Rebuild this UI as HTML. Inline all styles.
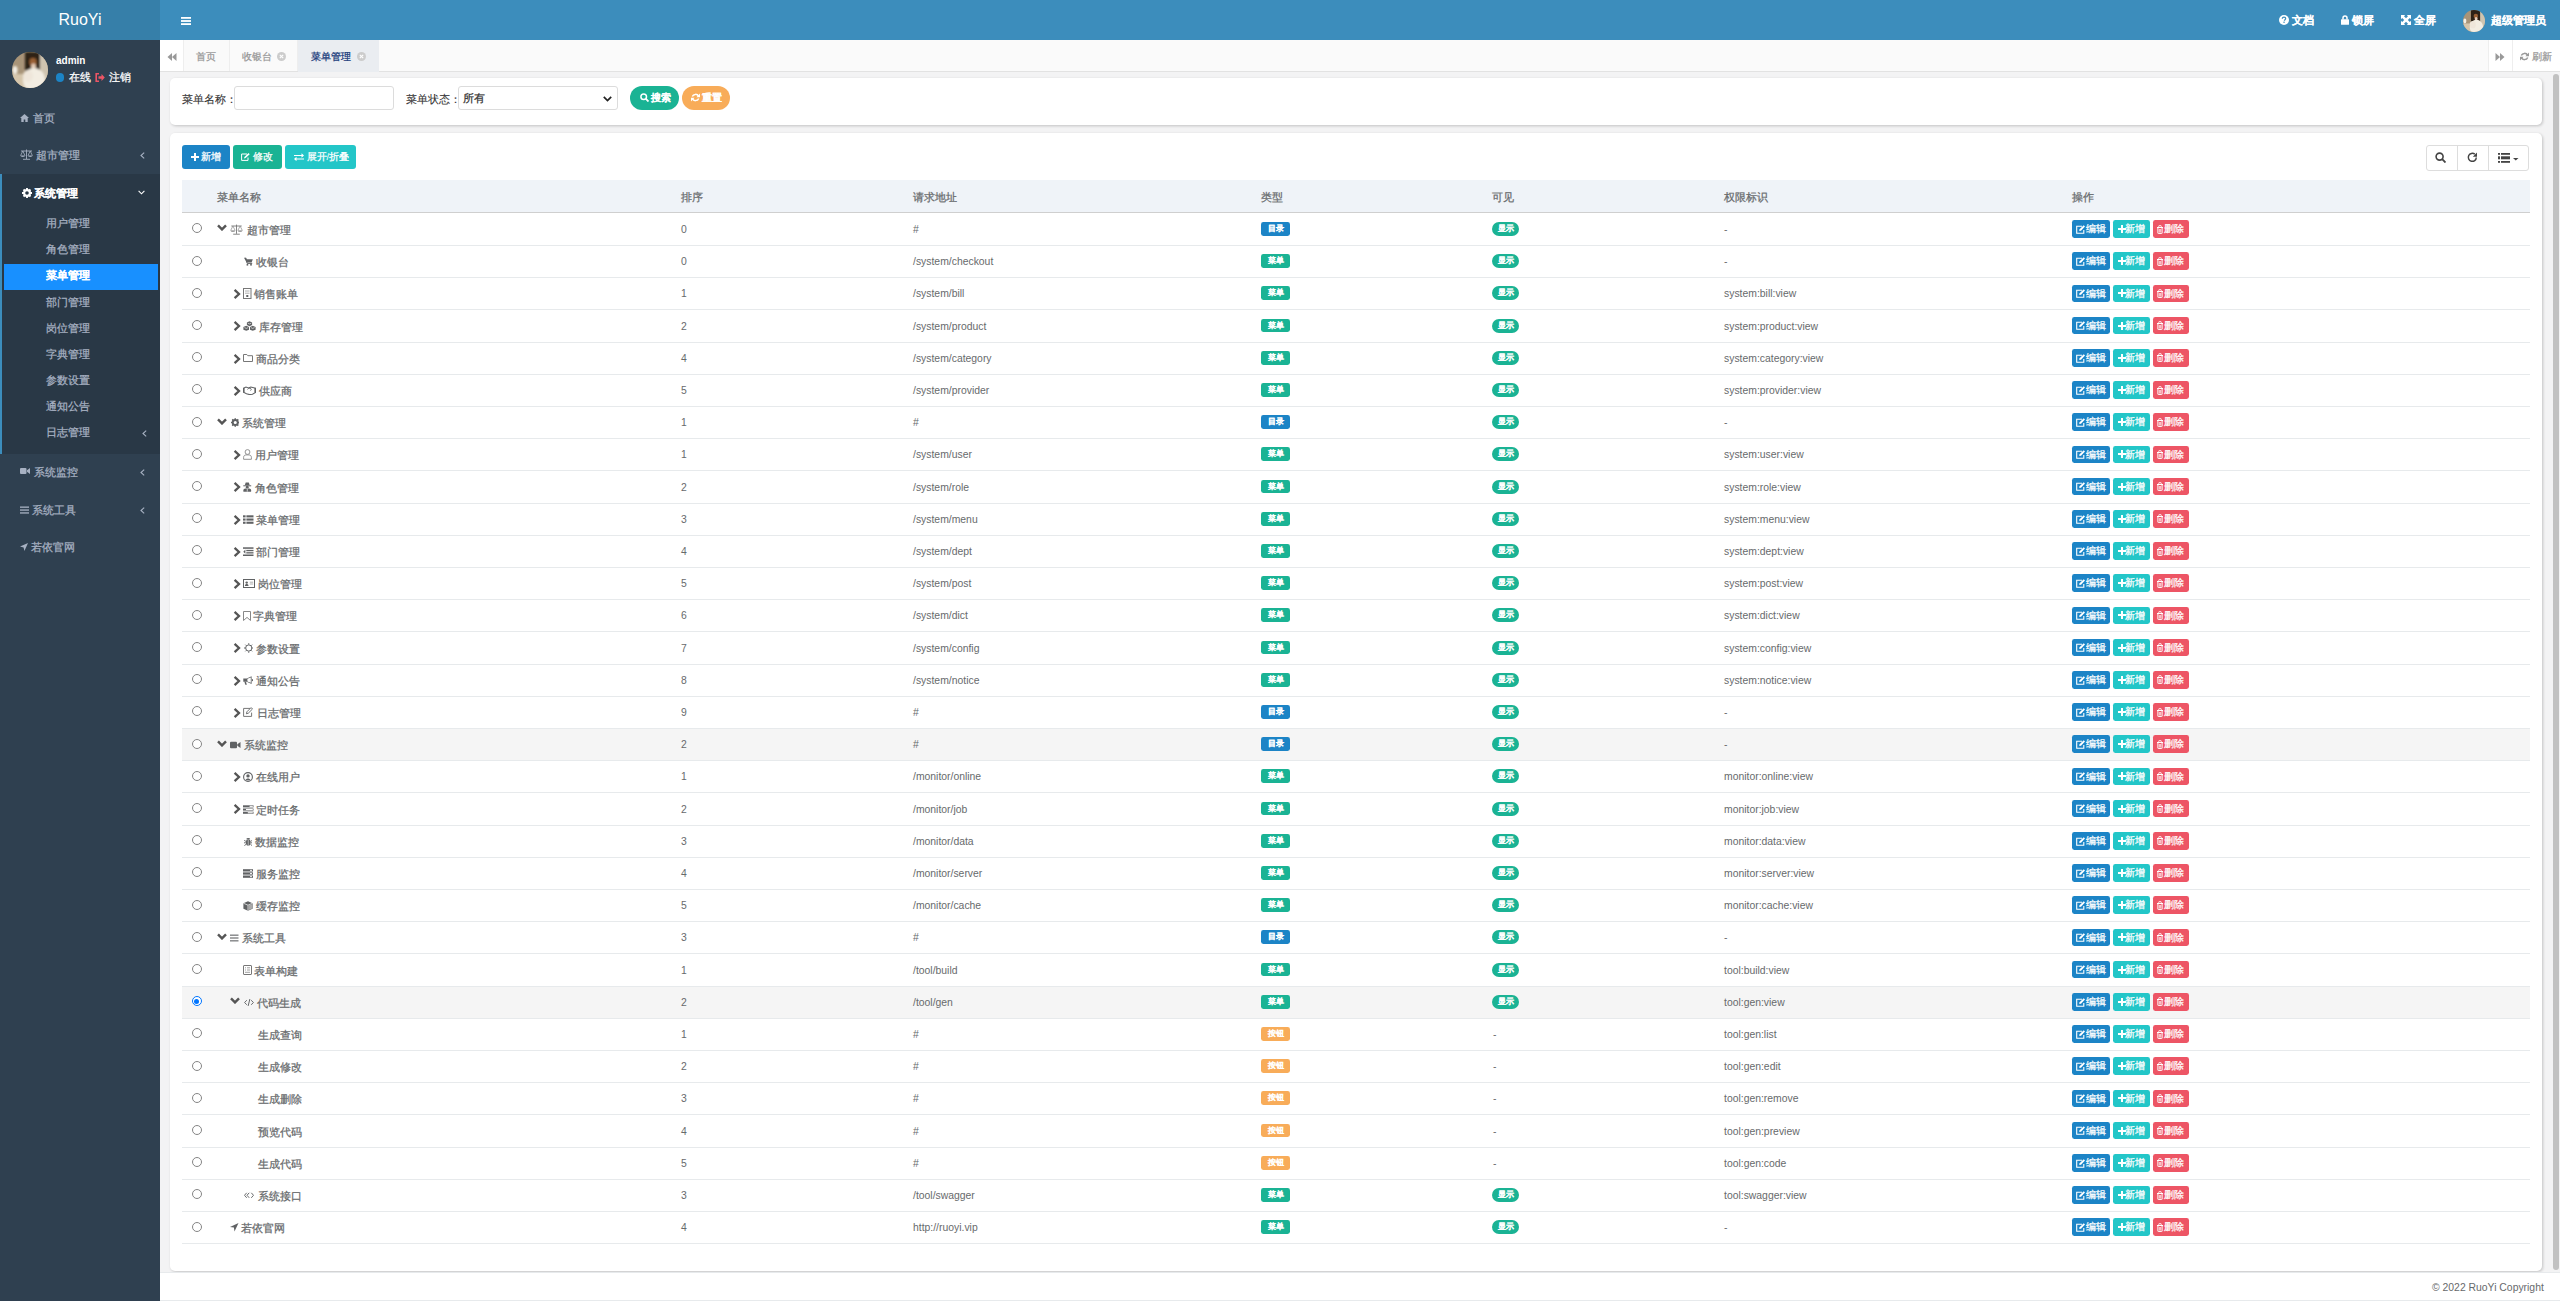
<!DOCTYPE html><html><head><meta charset="utf-8"><title>RuoYi</title><style>
*{box-sizing:border-box;margin:0;padding:0}
html,body{width:2560px;height:1301px;overflow:hidden}
body{font-family:"Liberation Sans",sans-serif;font-size:10.4px;color:#676a6c;background:#f3f3f4;position:relative}
.abs{position:absolute}
#side{position:absolute;left:0;top:0;width:160px;height:1301px;background:#2f4050}
#logo{position:absolute;left:0;top:0;width:160px;height:40px;background:#367fa9;color:#fff;font-size:16px;line-height:40px;text-align:center}
#hdr{position:absolute;left:160px;top:0;width:2400px;height:40px;background:#3c8dbc}
.menu{position:absolute;left:0;width:160px;color:#b8c7ce;font-size:10.4px;height:20px;line-height:20px;white-space:nowrap}
.menu .t{position:absolute}
.sub{position:absolute;left:45px;color:#b8c7ce;height:20px;line-height:20px}
#tabs{position:absolute;left:160px;top:40px;width:2400px;height:32px;background:#fafafa;border-bottom:1px solid #e2e2e2}
.tab{position:absolute;top:0;height:31px;line-height:31px;font-size:9.6px;color:#999;border-right:1px solid #eee;text-align:left}
.panel{position:absolute;left:170px;width:2372px;background:#fff;border-radius:5px;box-shadow:1px 1px 3px rgba(0,0,0,.2)}
.row{position:absolute;left:182px;width:2348px;height:32.2px;border-bottom:1px solid #e7eaec}
.cell{position:absolute;top:1px;line-height:30px;white-space:nowrap;font-size:10.4px;color:#676a6c}
.exp,.ico{position:absolute;line-height:0}
.radio{position:absolute;left:10px;top:9.6px;width:10px;height:10px;border:1px solid #858585;border-radius:50%;background:#fff}
.radio.sel{border:1.3px solid #0075ff;background:#fff}
.radio.sel::after{content:"";position:absolute;left:1.35px;top:1.35px;width:5px;height:5px;border-radius:50%;background:#0075ff}
.lblwrap{position:absolute;top:8.2px;line-height:0}
.lbl{display:inline-block;height:13.8px;line-height:13.8px;width:29px;text-align:center;font-size:7.8px;font-weight:bold;color:#fff;border-radius:2.4px}
.lp{background:#1c84c6}.ls{background:#1ab394}.lw{background:#f8ac59}
.badge{display:inline-block;height:14px;line-height:14px;width:27.4px;text-align:center;font-size:7.8px;font-weight:bold;color:#fff;border-radius:7px;background:#1ab394}
.ops{position:absolute;top:6.4px;height:18px;white-space:nowrap;line-height:0}
.bx{display:inline-block;position:relative;height:17.6px;line-height:17.6px;font-size:9.6px;color:#fff;border-radius:2.4px;margin-right:3.2px;vertical-align:top;text-align:left;white-space:nowrap}
.bp{background:#1c84c6;width:38px;padding-left:13.6px}.bi{background:#23c6c8;width:37px;padding-left:12.3px}.bd{background:#ed5565;width:35.7px;padding-left:10.2px}
.bx i{position:absolute;line-height:0}
.z{-webkit-text-stroke:0.25px currentColor;font-size:104%}
[style*="font-weight:bold"] .z,.lbl .z,.badge .z,.ns .z{-webkit-text-stroke:0.1px}

.avatar{position:absolute;border-radius:50%;overflow:hidden;background:
 radial-gradient(ellipse 30% 45% at 50% 72%, #f4efe4 0%, #ece3d2 60%, rgba(236,227,210,0) 100%),
 radial-gradient(ellipse 22% 20% at 48% 30%, #c9a07a 0%, #8a5a3a 60%, rgba(80,50,30,0) 100%),
 radial-gradient(circle at 15% 35%, #d8c7a8 0%, rgba(216,199,168,0) 25%),
 linear-gradient(180deg,#4a3a2c 0%, #6d5a45 40%, #bfae90 75%, #e4d8c2 100%)}
</style></head><body>
<div id="side"></div><div id="logo">RuoYi</div><div id="hdr"></div>
<div class="abs" style="left:11.8px;top:52.2px;width:36px;height:36px;line-height:0"><svg width="36" height="36" viewBox="0 0 36 36" style="display:block"><defs><clipPath id="aca"><circle cx="18" cy="18" r="18"/></clipPath><filter id="afa" x="-20%" y="-20%" width="140%" height="140%"><feGaussianBlur stdDeviation="1.3"/></filter></defs><g clip-path="url(#aca)"><rect width="36" height="36" fill="#a89478"/><g filter="url(#afa)"><rect x="24" y="0" width="14" height="36" fill="#cfc4b0"/><rect x="0" y="22" width="14" height="16" fill="#d6c6ac"/><rect x="13" y="0" width="15" height="20" fill="#2e2418"/><ellipse cx="3" cy="18" rx="2.5" ry="4" fill="#f4f0e6"/><ellipse cx="21" cy="10" rx="3.6" ry="4" fill="#9a6035"/><ellipse cx="21.5" cy="14.5" rx="2.4" ry="3" fill="#e6cdb8"/><ellipse cx="22" cy="28" rx="11" ry="12" fill="#f3ede2"/><ellipse cx="16" cy="24" rx="5" ry="6" fill="#efe6da"/></g></g></svg></div>
<span class="abs" style="left:56px;top:54px;line-height:14px;font-size:10px;font-weight:bold;color:#fff">admin</span>
<span class="abs" style="left:55.5px;top:73.2px;width:8.8px;height:8.8px;border-radius:50%;background:#1c84c6"></span>
<span class="abs" style="left:69px;top:70px;line-height:15px;font-size:10.4px;color:#fff"><span class="z">在线</span></span>
<span class="abs" style="left:95px;top:73px;line-height:0"><svg width="10" height="9" viewBox="0 0 10 9" style="display:inline-block;vertical-align:middle;"><path d="M4 0.8H1.2v7.4H4" fill="none" stroke="#ed5565" stroke-width="1.6"/><path d="M3.5 3.2h3V1l3.3 3.5L6.5 8V5.8h-3z" fill="#ed5565"/></svg></span>
<span class="abs" style="left:108.8px;top:70px;line-height:15px;font-size:10.4px;color:#fff"><span class="z">注销</span></span>
<span class="abs" style="left:20px;top:113.5px;line-height:0"><svg width="9" height="8" viewBox="0 0 9 8" style="display:inline-block;vertical-align:middle;"><path d="M4.5 0L0 4h1.3v4h2.4V5.5h1.6V8h2.4V4H9z" fill="#a7b1c2"/></svg></span>
<span class="abs sb" style="left:32.6px;top:109.5px;line-height:16px;font-size:10.4px;color:#a7b1c2;white-space:nowrap"><span class="z">首页</span></span>
<span class="abs" style="left:19.7px;top:149px;line-height:0"><svg width="13" height="11" viewBox="0 0 13 11" style="display:inline-block;vertical-align:middle;"><path d="M6.5 0.5v9.5M3 10.3h7M1 2h11" fill="none" stroke="#a7b1c2" stroke-width="0.9"/><path d="M2.8 2L0.6 6.6M2.8 2l2.2 4.6M10.2 2L8 6.6M10.2 2l2.2 4.6" fill="none" stroke="#a7b1c2" stroke-width="0.8"/><path d="M0.4 6.6h4.8a2.4 1.4 0 0 1-4.8 0zM7.8 6.6h4.8a2.4 1.4 0 0 1-4.8 0z" fill="#a7b1c2"/></svg></span>
<span class="abs sb" style="left:36.3px;top:146.5px;line-height:16px;font-size:10.4px;color:#a7b1c2;white-space:nowrap"><span class="z">超市管理</span></span>
<span class="abs" style="left:140px;top:152.0px;line-height:0"><svg width="5" height="7" viewBox="0 0 5 7" style="display:inline-block;vertical-align:middle;"><path d="M4.2 0.6L1 3.5l3.2 2.9" fill="none" stroke="#a7b1c2" stroke-width="1.1"/></svg></span>
<div class="abs" style="left:0;top:174px;width:160px;height:280px;background:#293846"></div>
<div class="abs" style="left:0;top:174px;width:2.2px;height:280px;background:#3c8dbc"></div>
<span class="abs" style="left:21.5px;top:187.8px;line-height:0"><svg width="10" height="10" viewBox="0 0 10 10" style="display:inline-block;vertical-align:middle;"><circle cx="5" cy="5" r="2.9" fill="none" stroke="#fff" stroke-width="2.2"/><path d="M5 0v2.2M5 7.8V10M0 5h2.2M7.8 5H10M1.5 1.5l1.5 1.5M7 7l1.5 1.5M1.5 8.5L3 7M7 3l1.5-1.5" stroke="#fff" stroke-width="1.9"/></svg></span>
<span class="abs sb" style="left:33.8px;top:184.5px;line-height:16px;font-size:10.4px;color:#fff;font-weight:bold;white-space:nowrap"><span class="z">系统管理</span></span>
<span class="abs" style="left:137.8px;top:189.5px;line-height:0"><svg width="7" height="5" viewBox="0 0 7 5" style="display:inline-block;vertical-align:middle;"><path d="M0.6 0.8L3.5 3.8l2.9-3" fill="none" stroke="#fff" stroke-width="1.1"/></svg></span>
<div class="abs" style="left:4px;top:263.7px;width:154px;height:26.1px;background:#1890ff"></div>
<span class="abs sb" style="left:45.5px;top:215px;line-height:16px;font-size:10.4px;color:#a7b1c2;white-space:nowrap"><span class="z">用户管理</span></span>
<span class="abs sb" style="left:45.5px;top:241px;line-height:16px;font-size:10.4px;color:#a7b1c2;white-space:nowrap"><span class="z">角色管理</span></span>
<span class="abs sb" style="left:45.5px;top:267.4px;line-height:16px;font-size:10.4px;color:#fff;font-weight:bold;white-space:nowrap"><span class="z">菜单管理</span></span>
<span class="abs sb" style="left:45.5px;top:293.5px;line-height:16px;font-size:10.4px;color:#a7b1c2;white-space:nowrap"><span class="z">部门管理</span></span>
<span class="abs sb" style="left:45.5px;top:319.5px;line-height:16px;font-size:10.4px;color:#a7b1c2;white-space:nowrap"><span class="z">岗位管理</span></span>
<span class="abs sb" style="left:45.5px;top:345.8px;line-height:16px;font-size:10.4px;color:#a7b1c2;white-space:nowrap"><span class="z">字典管理</span></span>
<span class="abs sb" style="left:45.5px;top:372px;line-height:16px;font-size:10.4px;color:#a7b1c2;white-space:nowrap"><span class="z">参数设置</span></span>
<span class="abs sb" style="left:45.5px;top:398px;line-height:16px;font-size:10.4px;color:#a7b1c2;white-space:nowrap"><span class="z">通知公告</span></span>
<span class="abs sb" style="left:45.5px;top:424px;line-height:16px;font-size:10.4px;color:#a7b1c2;white-space:nowrap"><span class="z">日志管理</span></span>
<span class="abs" style="left:142px;top:429.5px;line-height:0"><svg width="5" height="7" viewBox="0 0 5 7" style="display:inline-block;vertical-align:middle;"><path d="M4.2 0.6L1 3.5l3.2 2.9" fill="none" stroke="#a7b1c2" stroke-width="1.1"/></svg></span>
<span class="abs" style="left:20px;top:467.2px;line-height:0"><svg width="10" height="8" viewBox="0 0 10 8" style="display:inline-block;vertical-align:middle;"><rect x="0" y="1" width="6.5" height="6" rx="1" fill="#a7b1c2"/><path d="M7 3.2L10 1v6L7 4.8z" fill="#a7b1c2"/></svg></span>
<span class="abs sb" style="left:33.5px;top:463.7px;line-height:16px;font-size:10.4px;color:#a7b1c2;white-space:nowrap"><span class="z">系统监控</span></span>
<span class="abs" style="left:140px;top:469.0px;line-height:0"><svg width="5" height="7" viewBox="0 0 5 7" style="display:inline-block;vertical-align:middle;"><path d="M4.2 0.6L1 3.5l3.2 2.9" fill="none" stroke="#a7b1c2" stroke-width="1.1"/></svg></span>
<span class="abs" style="left:20px;top:505.5px;line-height:0"><svg width="9" height="8" viewBox="0 0 9 8" style="display:inline-block;vertical-align:middle;"><rect x="0" y="0.5" width="9" height="1.3" fill="#a7b1c2"/><rect x="0" y="3.4" width="9" height="1.3" fill="#a7b1c2"/><rect x="0" y="6.3" width="9" height="1.3" fill="#a7b1c2"/></svg></span>
<span class="abs sb" style="left:32px;top:501.8px;line-height:16px;font-size:10.4px;color:#a7b1c2;white-space:nowrap"><span class="z">系统工具</span></span>
<span class="abs" style="left:140px;top:507.0px;line-height:0"><svg width="5" height="7" viewBox="0 0 5 7" style="display:inline-block;vertical-align:middle;"><path d="M4.2 0.6L1 3.5l3.2 2.9" fill="none" stroke="#a7b1c2" stroke-width="1.1"/></svg></span>
<span class="abs" style="left:20px;top:542.5px;line-height:0"><svg width="8" height="8" viewBox="0 0 8 8" style="display:inline-block;vertical-align:middle;"><path d="M8 0L0 3.6l3.6 0.8L4.4 8z" fill="#a7b1c2"/></svg></span>
<span class="abs sb" style="left:31px;top:538.8px;line-height:16px;font-size:10.4px;color:#a7b1c2;white-space:nowrap"><span class="z">若依官网</span></span>
<span class="abs" style="left:181px;top:16.9px;line-height:0"><svg width="10" height="8" viewBox="0 0 10 8" style="display:inline-block;vertical-align:middle;"><rect x="0" y="0" width="10" height="1.8" fill="#fff"/><rect x="0" y="3.1" width="10" height="1.8" fill="#fff"/><rect x="0" y="6.2" width="10" height="1.8" fill="#fff"/></svg></span>
<span class="abs" style="left:2279px;top:14.9px;line-height:0"><svg width="10" height="10" viewBox="0 0 10 10" style="display:inline-block;vertical-align:middle;"><circle cx="5" cy="5" r="5" fill="#fff"/><path d="M3.3 3.7c0-1 0.8-1.6 1.7-1.6 1 0 1.7 0.6 1.7 1.5 0 1.1-1.3 1.2-1.3 2.1" fill="none" stroke="#3c8dbc" stroke-width="1.2"/><rect x="4.4" y="6.6" width="1.3" height="1.3" fill="#3c8dbc"/></svg></span>
<span class="abs" style="left:2292.2px;top:12.3px;line-height:16px;font-size:10.8px;font-weight:bold;color:#fff;white-space:nowrap"><span class="z">文档</span></span>
<span class="abs" style="left:2341px;top:15px;line-height:0"><svg width="8" height="10" viewBox="0 0 8 10" style="display:inline-block;vertical-align:middle;"><path d="M2 4.5V3a2 2 0 0 1 4 0v1.5" fill="none" stroke="#fff" stroke-width="1.5"/><rect x="0" y="4.3" width="8" height="5.5" rx="0.6" fill="#fff"/></svg></span>
<span class="abs" style="left:2352px;top:12.3px;line-height:16px;font-size:10.8px;font-weight:bold;color:#fff;white-space:nowrap"><span class="z">锁屏</span></span>
<span class="abs" style="left:2400.8px;top:15px;line-height:0"><svg width="10" height="10" viewBox="0 0 10 10" style="display:inline-block;vertical-align:middle;"><path d="M0 0h4.2L3 1.2l2 2 2-2L5.8 0H10v4.2L8.8 3l-2 2 2 2L10 5.8V10H5.8L7 8.8l-2-2-2 2L4.2 10H0V5.8L1.2 7l2-2-2-2L0 4.2z" fill="#fff"/></svg></span>
<span class="abs" style="left:2413.8px;top:12.3px;line-height:16px;font-size:10.8px;font-weight:bold;color:#fff;white-space:nowrap"><span class="z">全屏</span></span>
<div class="abs" style="left:2463px;top:9.6px;width:22px;height:22px;line-height:0"><svg width="22" height="22" viewBox="0 0 36 36" style="display:block"><defs><clipPath id="acb"><circle cx="18" cy="18" r="18"/></clipPath><filter id="afb" x="-20%" y="-20%" width="140%" height="140%"><feGaussianBlur stdDeviation="1.3"/></filter></defs><g clip-path="url(#acb)"><rect width="36" height="36" fill="#a89478"/><g filter="url(#afb)"><rect x="24" y="0" width="14" height="36" fill="#cfc4b0"/><rect x="0" y="22" width="14" height="16" fill="#d6c6ac"/><rect x="13" y="0" width="15" height="20" fill="#2e2418"/><ellipse cx="3" cy="18" rx="2.5" ry="4" fill="#f4f0e6"/><ellipse cx="21" cy="10" rx="3.6" ry="4" fill="#9a6035"/><ellipse cx="21.5" cy="14.5" rx="2.4" ry="3" fill="#e6cdb8"/><ellipse cx="22" cy="28" rx="11" ry="12" fill="#f3ede2"/><ellipse cx="16" cy="24" rx="5" ry="6" fill="#efe6da"/></g></g></svg></div>
<span class="abs" style="left:2491px;top:12.3px;line-height:16px;font-size:10.8px;font-weight:bold;color:#fff;white-space:nowrap"><span class="z">超级管理员</span></span>
<div id="tabs"></div>
<div class="abs" style="left:160px;top:40px;width:23.5px;height:31px;background:#fff;border-right:1px solid #eee"></div>
<span class="abs" style="left:167.3px;top:53.4px;line-height:0"><svg width="10" height="8" viewBox="0 0 10 8" style="display:inline-block;vertical-align:middle;"><path d="M5 0v8L0.5 4zM9.5 0v8L5 4z" fill="#999"/></svg></span>
<div class="abs" style="left:183.5px;top:40px;width:46px;height:31px;border-right:1px solid #eee"></div>
<span class="abs" style="left:196.4px;top:48.5px;line-height:16px;font-size:9.8px;color:#999"><span class="z">首页</span></span>
<div class="abs" style="left:229.5px;top:40px;width:68.5px;height:31px;border-right:1px solid #eee"></div>
<span class="abs" style="left:241.8px;top:48.5px;line-height:16px;font-size:9.8px;color:#999"><span class="z">收银台</span></span>
<span class="abs" style="left:277px;top:52.3px;line-height:0"><svg width="9" height="9" viewBox="0 0 9 9" style="display:inline-block;vertical-align:middle;"><circle cx="4.5" cy="4.5" r="4.5" fill="#ccc"/><path d="M2.8 2.8l3.4 3.4M6.2 2.8L2.8 6.2" stroke="#fff" stroke-width="1.1"/></svg></span>
<div class="abs" style="left:298.3px;top:40px;width:80.7px;height:32px;background:#eaedf1"></div>
<span class="abs" style="left:311.2px;top:48.5px;line-height:16px;font-size:9.8px;color:#17397a"><span class="z">菜单管理</span></span>
<span class="abs" style="left:357px;top:52.3px;line-height:0"><svg width="9" height="9" viewBox="0 0 9 9" style="display:inline-block;vertical-align:middle;"><circle cx="4.5" cy="4.5" r="4.5" fill="#ccc"/><path d="M2.8 2.8l3.4 3.4M6.2 2.8L2.8 6.2" stroke="#fff" stroke-width="1.1"/></svg></span>
<div class="abs" style="left:2488.3px;top:40px;width:72px;height:31px;background:#fff;border-left:1px solid #eee"></div>
<div class="abs" style="left:2512px;top:40px;width:1px;height:31px;background:#eee"></div>
<span class="abs" style="left:2495.4px;top:53.4px;line-height:0"><svg width="10" height="8" viewBox="0 0 10 8" style="display:inline-block;vertical-align:middle;"><path d="M0.5 0v8L5 4zM5 0v8L9.5 4z" fill="#999"/></svg></span>
<span class="abs" style="left:2520px;top:52px;line-height:0"><svg width="9" height="9" viewBox="0 0 9 9" style="display:inline-block;vertical-align:middle;"><path d="M7.6 3.4A3.4 3.4 0 0 0 1.3 3.6M1.4 5.6A3.4 3.4 0 0 0 7.7 5.4" fill="none" stroke="#999" stroke-width="1.5"/><path d="M9 0.6v3.6H5.4zM0 8.4V4.8h3.6z" fill="#999"/></svg></span>
<span class="abs" style="left:2532px;top:48.5px;line-height:16px;font-size:9.8px;color:#999"><span class="z">刷新</span></span>
<div class="panel" style="top:78px;height:47px"></div>
<div class="panel" style="top:133px;height:1138px"></div>
<span class="abs ns" style="left:182.3px;top:91px;line-height:16px;font-size:10.4px;color:#333"><span class="z">菜单名称：</span></span>
<div class="abs" style="left:234.3px;top:86.2px;width:159.8px;height:23.6px;border:1px solid #dcdcdc;border-radius:3px;background:#fff"></div>
<span class="abs ns" style="left:406.4px;top:91px;line-height:16px;font-size:10.4px;color:#333"><span class="z">菜单状态：</span></span>
<div class="abs" style="left:458.4px;top:86.2px;width:159.4px;height:23.6px;border:1px solid #dcdcdc;border-radius:3px;background:#fff"></div>
<span class="abs" style="left:463px;top:90px;line-height:16px;font-size:10.4px;color:#333"><span class="z">所有</span></span>
<span class="abs" style="left:602.5px;top:95.5px;line-height:0"><svg width="9" height="6" viewBox="0 0 9 6" style="display:inline-block;vertical-align:middle;"><path d="M0.8 0.8L4.5 4.5 8.2 0.8" fill="none" stroke="#222" stroke-width="1.7"/></svg></span>
<div class="abs" style="left:630px;top:86px;width:48.8px;height:23.8px;border-radius:12px;background:#1ab394"></div>
<span class="abs" style="left:639.5px;top:93px;line-height:0"><svg width="9" height="9" viewBox="0 0 9 9" style="display:inline-block;vertical-align:middle;"><circle cx="3.7" cy="3.7" r="2.8" fill="none" stroke="#fff" stroke-width="1.5"/><path d="M5.7 5.7L8.5 8.5" stroke="#fff" stroke-width="1.8"/></svg></span>
<span class="abs" style="left:651px;top:90px;line-height:16px;font-size:9.6px;color:#fff;font-weight:bold"><span class="z">搜索</span></span>
<div class="abs" style="left:682px;top:86px;width:48px;height:23.8px;border-radius:12px;background:#f8ac59"></div>
<span class="abs" style="left:690.5px;top:93px;line-height:0"><svg width="9" height="9" viewBox="0 0 9 9" style="display:inline-block;vertical-align:middle;"><path d="M7.6 3.4A3.4 3.4 0 0 0 1.3 3.6M1.4 5.6A3.4 3.4 0 0 0 7.7 5.4" fill="none" stroke="#fff" stroke-width="1.5"/><path d="M9 0.6v3.6H5.4zM0 8.4V4.8h3.6z" fill="#fff"/></svg></span>
<span class="abs" style="left:702px;top:90px;line-height:16px;font-size:9.6px;color:#fff;font-weight:bold"><span class="z">重置</span></span>
<div class="abs" style="left:182.1px;top:145.2px;width:47.7px;height:23.5px;border-radius:3px;background:#1c84c6"></div><span class="abs" style="left:190.6px;top:152.5px;line-height:0"><svg width="8" height="8" viewBox="0 0 8 8" style="display:inline-block;vertical-align:middle;"><path d="M3 0h2v3h3v2H5v3H3V5H0V3h3z" fill="#fff"/></svg></span><span class="abs" style="left:201px;top:149px;line-height:16px;font-size:9.6px;color:#fff;white-space:nowrap"><span class="z">新增</span></span>
<div class="abs" style="left:233.1px;top:145.2px;width:48.6px;height:23.5px;border-radius:3px;background:#1ab394"></div><span class="abs" style="left:241.1px;top:152.5px;line-height:0"><svg width="9" height="8" viewBox="0 0 9 8" style="display:inline-block;vertical-align:middle;"><path d="M6 1H0.6v6.4H7V4.5" fill="none" stroke="#fff" stroke-width="1"/><path d="M3 5.5l0.4-1.6L7.5 0l1.2 1.2L4.6 5.1z" fill="#fff"/></svg></span><span class="abs" style="left:253px;top:149px;line-height:16px;font-size:9.6px;color:#fff;white-space:nowrap"><span class="z">修改</span></span>
<div class="abs" style="left:285.1px;top:145.2px;width:70.9px;height:23.5px;border-radius:3px;background:#23c6c8"></div><span class="abs" style="left:293.6px;top:152.5px;line-height:0"><svg width="10" height="8" viewBox="0 0 10 8" style="display:inline-block;vertical-align:middle;"><path d="M0 2h7.5V0.3L10 2.5 7.5 4.7V3H0zM10 5.5H2.5V3.8L0 6l2.5 2.2V6.5H10z" fill="#fff"/></svg></span><span class="abs" style="left:306.5px;top:149px;line-height:16px;font-size:9.6px;color:#fff;white-space:nowrap"><span class="z">展开</span>/<span class="z">折叠</span></span>
<div class="abs" style="left:2425.6px;top:145.2px;width:103.8px;height:26.3px;border:1px solid #ddd;border-radius:3px;background:#fff"></div>
<div class="abs" style="left:2456.5px;top:145.2px;width:1px;height:26.3px;background:#ddd"></div>
<div class="abs" style="left:2488.3px;top:145.2px;width:1px;height:26.3px;background:#ddd"></div>
<span class="abs" style="left:2435px;top:152px;line-height:0"><svg width="11" height="11" viewBox="0 0 11 11" style="display:inline-block;vertical-align:middle;"><circle cx="4.6" cy="4.6" r="3.5" fill="none" stroke="#444" stroke-width="1.6"/><path d="M7.2 7.2L10.5 10.5" stroke="#444" stroke-width="1.8"/></svg></span>
<span class="abs" style="left:2467px;top:152px;line-height:0"><svg width="11" height="11" viewBox="0 0 11 11" style="display:inline-block;vertical-align:middle;"><path d="M9.3 5.5A4 4 0 1 1 7.8 2.2" fill="none" stroke="#444" stroke-width="1.5"/><path d="M10 0.5v4.2H5.8z" fill="#444"/></svg></span>
<span class="abs" style="left:2498px;top:153px;line-height:0"><svg width="21" height="10" viewBox="0 0 21 10" style="display:inline-block;vertical-align:middle;"><rect x="0" y="0" width="2" height="1.8" fill="#444"/><rect x="3" y="0" width="9" height="1.8" fill="#444"/><rect x="0" y="3.3" width="2" height="3" fill="#444"/><rect x="3" y="3.3" width="9" height="3" fill="#444"/><rect x="0" y="8" width="2" height="1.8" fill="#444"/><rect x="3" y="8" width="9" height="1.8" fill="#444"/><path d="M15 5h5.5L17.75 7.6z" fill="#444"/></svg></span>
<div class="abs" style="left:182px;top:180px;width:2348px;height:33px;background:#eff3f8;border-bottom:1.3px solid #cfcfcf"></div>
<span class="abs" style="left:217px;top:189px;line-height:16px;color:#676a6c"><span class="z">菜单名称</span></span>
<span class="abs" style="left:681px;top:189px;line-height:16px;color:#676a6c"><span class="z">排序</span></span>
<span class="abs" style="left:913px;top:189px;line-height:16px;color:#676a6c"><span class="z">请求地址</span></span>
<span class="abs" style="left:1261px;top:189px;line-height:16px;color:#676a6c"><span class="z">类型</span></span>
<span class="abs" style="left:1492px;top:189px;line-height:16px;color:#676a6c"><span class="z">可见</span></span>
<span class="abs" style="left:1724px;top:189px;line-height:16px;color:#676a6c"><span class="z">权限标识</span></span>
<span class="abs" style="left:2072px;top:189px;line-height:16px;color:#676a6c"><span class="z">操作</span></span>
<div class="row" style="top:213.90px;"><span class="radio"></span><span class="exp" style="left:35.0px;top:10.50px"><svg width="10" height="7" viewBox="0 0 10 7" style="display:inline-block;vertical-align:middle;"><path d="M1 1.3 L5 5.4 L9 1.3" fill="none" stroke="#555" stroke-width="2.4"/></svg></span><span class="ico" style="left:48.0px;top:10.00px"><svg width="13" height="11" viewBox="0 0 13 11" style="display:inline-block;vertical-align:middle;"><path d="M6.5 0.6v9.2M3.2 10.2h6.6M1.3 2h10.4" fill="none" stroke="#777" stroke-width="0.9"/><path d="M2.9 2L0.7 6.4M2.9 2l2.2 4.4M10.1 2L7.9 6.4M10.1 2l2.2 4.4" fill="none" stroke="#888" stroke-width="0.7"/><path d="M0.5 6.4h4.8a2.4 1.3 0 0 1-4.8 0zM7.7 6.4h4.8a2.4 1.3 0 0 1-4.8 0z" fill="#777"/></svg></span><span class="cell" style="left:64.5px"><span class="z">超市管理</span></span><span class="cell" style="left:499px">0</span><span class="cell" style="left:731px">#</span><span class="lblwrap" style="left:1079px"><span class="lbl lp"><span class="z">目录</span></span></span><span class="lblwrap" style="left:1310px"><span class="badge"><span class="z">显示</span></span></span><span class="cell" style="left:1542px">-</span><span class="ops" style="left:1890px"><span class="bx bp"><i style="left:4.3px;top:4.6px"><svg width="9" height="9" viewBox="0 0 9 9" style="display:inline-block;vertical-align:middle;"><path d="M6 1.2H0.7v7.1h7.1V5" fill="none" stroke="#fff" stroke-width="1.1"/><path d="M3.2 6.1l0.4-1.8L7.7 0.2l1.3 1.3L5 5.7z" fill="#fff"/></svg></i><span class="z">编辑</span></span><span class="bx bi"><i style="left:5px;top:4.8px"><svg width="8" height="8" viewBox="0 0 8 8" style="display:inline-block;vertical-align:middle;"><path d="M3 0h2v3h3v2H5v3H3V5H0V3h3z" fill="#fff"/></svg></i><span class="z">新增</span></span><span class="bx bd"><i style="left:3.8px;top:4.4px"><svg width="6" height="9" viewBox="0 0 6 9" style="display:inline-block;vertical-align:middle;"><path d="M1.8 2V1.2a0.8 0.8 0 0 1 0.8-0.8h0.8a0.8 0.8 0 0 1 0.8 0.8V2" fill="none" stroke="#fff" stroke-width="0.9"/><rect x="0" y="2" width="6" height="1" fill="#fff"/><path d="M0.9 3v5.1a0.5 0.5 0 0 0 0.5 0.5h3.2a0.5 0.5 0 0 0 0.5-0.5V3" fill="none" stroke="#fff" stroke-width="1"/><path d="M2.4 4v3.6M3.6 4v3.6" stroke="#fff" stroke-width="0.7"/></svg></i><span class="z">删除</span></span></span></div>
<div class="row" style="top:246.10px;"><span class="radio"></span><span class="ico" style="left:61.5px;top:11.00px"><svg width="9" height="9" viewBox="0 0 9 9" style="display:inline-block;vertical-align:middle;"><path d="M0 0.8h1.8l0.6 1.4h6.4L7.6 5.6H2.6z" fill="#606264"/><path d="M1.8 0.8l1.4 5.6h5" fill="none" stroke="#606264" stroke-width="1"/><rect x="2.6" y="7" width="1.6" height="1.6" fill="#606264"/><rect x="6.2" y="7" width="1.6" height="1.6" fill="#606264"/></svg></span><span class="cell" style="left:73.5px"><span class="z">收银台</span></span><span class="cell" style="left:499px">0</span><span class="cell" style="left:731px">/system/checkout</span><span class="lblwrap" style="left:1079px"><span class="lbl ls"><span class="z">菜单</span></span></span><span class="lblwrap" style="left:1310px"><span class="badge"><span class="z">显示</span></span></span><span class="cell" style="left:1542px">-</span><span class="ops" style="left:1890px"><span class="bx bp"><i style="left:4.3px;top:4.6px"><svg width="9" height="9" viewBox="0 0 9 9" style="display:inline-block;vertical-align:middle;"><path d="M6 1.2H0.7v7.1h7.1V5" fill="none" stroke="#fff" stroke-width="1.1"/><path d="M3.2 6.1l0.4-1.8L7.7 0.2l1.3 1.3L5 5.7z" fill="#fff"/></svg></i><span class="z">编辑</span></span><span class="bx bi"><i style="left:5px;top:4.8px"><svg width="8" height="8" viewBox="0 0 8 8" style="display:inline-block;vertical-align:middle;"><path d="M3 0h2v3h3v2H5v3H3V5H0V3h3z" fill="#fff"/></svg></i><span class="z">新增</span></span><span class="bx bd"><i style="left:3.8px;top:4.4px"><svg width="6" height="9" viewBox="0 0 6 9" style="display:inline-block;vertical-align:middle;"><path d="M1.8 2V1.2a0.8 0.8 0 0 1 0.8-0.8h0.8a0.8 0.8 0 0 1 0.8 0.8V2" fill="none" stroke="#fff" stroke-width="0.9"/><rect x="0" y="2" width="6" height="1" fill="#fff"/><path d="M0.9 3v5.1a0.5 0.5 0 0 0 0.5 0.5h3.2a0.5 0.5 0 0 0 0.5-0.5V3" fill="none" stroke="#fff" stroke-width="1"/><path d="M2.4 4v3.6M3.6 4v3.6" stroke="#fff" stroke-width="0.7"/></svg></i><span class="z">删除</span></span></span></div>
<div class="row" style="top:278.30px;"><span class="radio"></span><span class="exp" style="left:50.5px;top:10.90px"><svg width="8" height="10" viewBox="0 0 8 10" style="display:inline-block;vertical-align:middle;"><path d="M1.6 0.9 L6 5 L1.6 9.1" fill="none" stroke="#555" stroke-width="2.3"/></svg></span><span class="ico" style="left:61.2px;top:10.00px"><svg width="8.5" height="11" viewBox="0 0 8.5 11" style="display:inline-block;vertical-align:middle;"><rect x="0.5" y="0.5" width="7.5" height="10" fill="none" stroke="#777" stroke-width="1"/><path d="M2 3h4.5M2 5.2h4.5" stroke="#999" stroke-width="0.8"/><rect x="3.3" y="7" width="2" height="2" fill="#606264"/></svg></span><span class="cell" style="left:71.8px"><span class="z">销售账单</span></span><span class="cell" style="left:499px">1</span><span class="cell" style="left:731px">/system/bill</span><span class="lblwrap" style="left:1079px"><span class="lbl ls"><span class="z">菜单</span></span></span><span class="lblwrap" style="left:1310px"><span class="badge"><span class="z">显示</span></span></span><span class="cell" style="left:1542px">system:bill:view</span><span class="ops" style="left:1890px"><span class="bx bp"><i style="left:4.3px;top:4.6px"><svg width="9" height="9" viewBox="0 0 9 9" style="display:inline-block;vertical-align:middle;"><path d="M6 1.2H0.7v7.1h7.1V5" fill="none" stroke="#fff" stroke-width="1.1"/><path d="M3.2 6.1l0.4-1.8L7.7 0.2l1.3 1.3L5 5.7z" fill="#fff"/></svg></i><span class="z">编辑</span></span><span class="bx bi"><i style="left:5px;top:4.8px"><svg width="8" height="8" viewBox="0 0 8 8" style="display:inline-block;vertical-align:middle;"><path d="M3 0h2v3h3v2H5v3H3V5H0V3h3z" fill="#fff"/></svg></i><span class="z">新增</span></span><span class="bx bd"><i style="left:3.8px;top:4.4px"><svg width="6" height="9" viewBox="0 0 6 9" style="display:inline-block;vertical-align:middle;"><path d="M1.8 2V1.2a0.8 0.8 0 0 1 0.8-0.8h0.8a0.8 0.8 0 0 1 0.8 0.8V2" fill="none" stroke="#fff" stroke-width="0.9"/><rect x="0" y="2" width="6" height="1" fill="#fff"/><path d="M0.9 3v5.1a0.5 0.5 0 0 0 0.5 0.5h3.2a0.5 0.5 0 0 0 0.5-0.5V3" fill="none" stroke="#fff" stroke-width="1"/><path d="M2.4 4v3.6M3.6 4v3.6" stroke="#fff" stroke-width="0.7"/></svg></i><span class="z">删除</span></span></span></div>
<div class="row" style="top:310.50px;"><span class="radio"></span><span class="exp" style="left:50.5px;top:10.90px"><svg width="8" height="10" viewBox="0 0 8 10" style="display:inline-block;vertical-align:middle;"><path d="M1.6 0.9 L6 5 L1.6 9.1" fill="none" stroke="#555" stroke-width="2.3"/></svg></span><span class="ico" style="left:61.0px;top:10.50px"><svg width="13" height="10" viewBox="0 0 13 10" style="display:inline-block;vertical-align:middle;"><path d="M6.5 0.3l2.6 1.1v2.7L6.5 5.2 3.9 4.1V1.4z" fill="#606264"/><path d="M3.3 4.8l2.7 1.1v2.8L3.3 9.8 0.4 8.7V5.9z" fill="#606264"/><path d="M9.7 4.8l2.9 1.1v2.8L9.7 9.8 7 8.7V5.9z" fill="#606264"/><path d="M4.8 2.2l1.7 0.7 1.7-0.7M1.4 6.6l1.9 0.8 1.9-0.8M7.9 6.6l1.8 0.8 1.9-0.8" fill="none" stroke="#fff" stroke-width="0.6"/></svg></span><span class="cell" style="left:77.0px"><span class="z">库存管理</span></span><span class="cell" style="left:499px">2</span><span class="cell" style="left:731px">/system/product</span><span class="lblwrap" style="left:1079px"><span class="lbl ls"><span class="z">菜单</span></span></span><span class="lblwrap" style="left:1310px"><span class="badge"><span class="z">显示</span></span></span><span class="cell" style="left:1542px">system:product:view</span><span class="ops" style="left:1890px"><span class="bx bp"><i style="left:4.3px;top:4.6px"><svg width="9" height="9" viewBox="0 0 9 9" style="display:inline-block;vertical-align:middle;"><path d="M6 1.2H0.7v7.1h7.1V5" fill="none" stroke="#fff" stroke-width="1.1"/><path d="M3.2 6.1l0.4-1.8L7.7 0.2l1.3 1.3L5 5.7z" fill="#fff"/></svg></i><span class="z">编辑</span></span><span class="bx bi"><i style="left:5px;top:4.8px"><svg width="8" height="8" viewBox="0 0 8 8" style="display:inline-block;vertical-align:middle;"><path d="M3 0h2v3h3v2H5v3H3V5H0V3h3z" fill="#fff"/></svg></i><span class="z">新增</span></span><span class="bx bd"><i style="left:3.8px;top:4.4px"><svg width="6" height="9" viewBox="0 0 6 9" style="display:inline-block;vertical-align:middle;"><path d="M1.8 2V1.2a0.8 0.8 0 0 1 0.8-0.8h0.8a0.8 0.8 0 0 1 0.8 0.8V2" fill="none" stroke="#fff" stroke-width="0.9"/><rect x="0" y="2" width="6" height="1" fill="#fff"/><path d="M0.9 3v5.1a0.5 0.5 0 0 0 0.5 0.5h3.2a0.5 0.5 0 0 0 0.5-0.5V3" fill="none" stroke="#fff" stroke-width="1"/><path d="M2.4 4v3.6M3.6 4v3.6" stroke="#fff" stroke-width="0.7"/></svg></i><span class="z">删除</span></span></span></div>
<div class="row" style="top:342.70px;"><span class="radio"></span><span class="exp" style="left:50.5px;top:10.90px"><svg width="8" height="10" viewBox="0 0 8 10" style="display:inline-block;vertical-align:middle;"><path d="M1.6 0.9 L6 5 L1.6 9.1" fill="none" stroke="#555" stroke-width="2.3"/></svg></span><span class="ico" style="left:61.0px;top:11.50px"><svg width="10" height="8" viewBox="0 0 10 8" style="display:inline-block;vertical-align:middle;"><path d="M0.5 0.5h3.3l1 1.2h4.7v5.8H0.5z" fill="none" stroke="#777" stroke-width="1"/></svg></span><span class="cell" style="left:73.5px"><span class="z">商品分类</span></span><span class="cell" style="left:499px">4</span><span class="cell" style="left:731px">/system/category</span><span class="lblwrap" style="left:1079px"><span class="lbl ls"><span class="z">菜单</span></span></span><span class="lblwrap" style="left:1310px"><span class="badge"><span class="z">显示</span></span></span><span class="cell" style="left:1542px">system:category:view</span><span class="ops" style="left:1890px"><span class="bx bp"><i style="left:4.3px;top:4.6px"><svg width="9" height="9" viewBox="0 0 9 9" style="display:inline-block;vertical-align:middle;"><path d="M6 1.2H0.7v7.1h7.1V5" fill="none" stroke="#fff" stroke-width="1.1"/><path d="M3.2 6.1l0.4-1.8L7.7 0.2l1.3 1.3L5 5.7z" fill="#fff"/></svg></i><span class="z">编辑</span></span><span class="bx bi"><i style="left:5px;top:4.8px"><svg width="8" height="8" viewBox="0 0 8 8" style="display:inline-block;vertical-align:middle;"><path d="M3 0h2v3h3v2H5v3H3V5H0V3h3z" fill="#fff"/></svg></i><span class="z">新增</span></span><span class="bx bd"><i style="left:3.8px;top:4.4px"><svg width="6" height="9" viewBox="0 0 6 9" style="display:inline-block;vertical-align:middle;"><path d="M1.8 2V1.2a0.8 0.8 0 0 1 0.8-0.8h0.8a0.8 0.8 0 0 1 0.8 0.8V2" fill="none" stroke="#fff" stroke-width="0.9"/><rect x="0" y="2" width="6" height="1" fill="#fff"/><path d="M0.9 3v5.1a0.5 0.5 0 0 0 0.5 0.5h3.2a0.5 0.5 0 0 0 0.5-0.5V3" fill="none" stroke="#fff" stroke-width="1"/><path d="M2.4 4v3.6M3.6 4v3.6" stroke="#fff" stroke-width="0.7"/></svg></i><span class="z">删除</span></span></span></div>
<div class="row" style="top:374.90px;"><span class="radio"></span><span class="exp" style="left:50.5px;top:10.90px"><svg width="8" height="10" viewBox="0 0 8 10" style="display:inline-block;vertical-align:middle;"><path d="M1.6 0.9 L6 5 L1.6 9.1" fill="none" stroke="#555" stroke-width="2.3"/></svg></span><span class="ico" style="left:61.0px;top:11.00px"><svg width="13" height="9" viewBox="0 0 13 9" style="display:inline-block;vertical-align:middle;"><path d="M0.4 2.2L3 1l2.4 0.9L7.8 1 12.6 2.2v4.2L9.5 8.2 6.5 8.6 3.5 7.8 0.4 6.2z" fill="none" stroke="#606264" stroke-width="1.1"/><path d="M4.5 3.4c1-1.4 2.4-1.4 3.5-0.6 0.6 0.5 0.2 1.6-0.6 1.6" fill="none" stroke="#606264" stroke-width="0.9"/><rect x="0" y="2" width="1.6" height="4.5" fill="#606264"/><rect x="11.4" y="2" width="1.6" height="4.5" fill="#606264"/></svg></span><span class="cell" style="left:77.0px"><span class="z">供应商</span></span><span class="cell" style="left:499px">5</span><span class="cell" style="left:731px">/system/provider</span><span class="lblwrap" style="left:1079px"><span class="lbl ls"><span class="z">菜单</span></span></span><span class="lblwrap" style="left:1310px"><span class="badge"><span class="z">显示</span></span></span><span class="cell" style="left:1542px">system:provider:view</span><span class="ops" style="left:1890px"><span class="bx bp"><i style="left:4.3px;top:4.6px"><svg width="9" height="9" viewBox="0 0 9 9" style="display:inline-block;vertical-align:middle;"><path d="M6 1.2H0.7v7.1h7.1V5" fill="none" stroke="#fff" stroke-width="1.1"/><path d="M3.2 6.1l0.4-1.8L7.7 0.2l1.3 1.3L5 5.7z" fill="#fff"/></svg></i><span class="z">编辑</span></span><span class="bx bi"><i style="left:5px;top:4.8px"><svg width="8" height="8" viewBox="0 0 8 8" style="display:inline-block;vertical-align:middle;"><path d="M3 0h2v3h3v2H5v3H3V5H0V3h3z" fill="#fff"/></svg></i><span class="z">新增</span></span><span class="bx bd"><i style="left:3.8px;top:4.4px"><svg width="6" height="9" viewBox="0 0 6 9" style="display:inline-block;vertical-align:middle;"><path d="M1.8 2V1.2a0.8 0.8 0 0 1 0.8-0.8h0.8a0.8 0.8 0 0 1 0.8 0.8V2" fill="none" stroke="#fff" stroke-width="0.9"/><rect x="0" y="2" width="6" height="1" fill="#fff"/><path d="M0.9 3v5.1a0.5 0.5 0 0 0 0.5 0.5h3.2a0.5 0.5 0 0 0 0.5-0.5V3" fill="none" stroke="#fff" stroke-width="1"/><path d="M2.4 4v3.6M3.6 4v3.6" stroke="#fff" stroke-width="0.7"/></svg></i><span class="z">删除</span></span></span></div>
<div class="row" style="top:407.10px;"><span class="radio"></span><span class="exp" style="left:35.0px;top:10.50px"><svg width="10" height="7" viewBox="0 0 10 7" style="display:inline-block;vertical-align:middle;"><path d="M1 1.3 L5 5.4 L9 1.3" fill="none" stroke="#555" stroke-width="2.4"/></svg></span><span class="ico" style="left:48.7px;top:11.00px"><svg width="8.5" height="9" viewBox="0 0 8.5 9" style="display:inline-block;vertical-align:middle;"><circle cx="4.25" cy="4.5" r="2.5" fill="none" stroke="#606264" stroke-width="1.9"/><path d="M4.25 0.2v1.8M4.25 7v1.8M0 4.5h1.8M6.7 4.5h1.8M1.2 1.4l1.3 1.3M6 6.3l1.3 1.3M1.2 7.6l1.3-1.3M6 2.7l1.3-1.3" stroke="#606264" stroke-width="1.5"/></svg></span><span class="cell" style="left:59.7px"><span class="z">系统管理</span></span><span class="cell" style="left:499px">1</span><span class="cell" style="left:731px">#</span><span class="lblwrap" style="left:1079px"><span class="lbl lp"><span class="z">目录</span></span></span><span class="lblwrap" style="left:1310px"><span class="badge"><span class="z">显示</span></span></span><span class="cell" style="left:1542px">-</span><span class="ops" style="left:1890px"><span class="bx bp"><i style="left:4.3px;top:4.6px"><svg width="9" height="9" viewBox="0 0 9 9" style="display:inline-block;vertical-align:middle;"><path d="M6 1.2H0.7v7.1h7.1V5" fill="none" stroke="#fff" stroke-width="1.1"/><path d="M3.2 6.1l0.4-1.8L7.7 0.2l1.3 1.3L5 5.7z" fill="#fff"/></svg></i><span class="z">编辑</span></span><span class="bx bi"><i style="left:5px;top:4.8px"><svg width="8" height="8" viewBox="0 0 8 8" style="display:inline-block;vertical-align:middle;"><path d="M3 0h2v3h3v2H5v3H3V5H0V3h3z" fill="#fff"/></svg></i><span class="z">新增</span></span><span class="bx bd"><i style="left:3.8px;top:4.4px"><svg width="6" height="9" viewBox="0 0 6 9" style="display:inline-block;vertical-align:middle;"><path d="M1.8 2V1.2a0.8 0.8 0 0 1 0.8-0.8h0.8a0.8 0.8 0 0 1 0.8 0.8V2" fill="none" stroke="#fff" stroke-width="0.9"/><rect x="0" y="2" width="6" height="1" fill="#fff"/><path d="M0.9 3v5.1a0.5 0.5 0 0 0 0.5 0.5h3.2a0.5 0.5 0 0 0 0.5-0.5V3" fill="none" stroke="#fff" stroke-width="1"/><path d="M2.4 4v3.6M3.6 4v3.6" stroke="#fff" stroke-width="0.7"/></svg></i><span class="z">删除</span></span></span></div>
<div class="row" style="top:439.30px;"><span class="radio"></span><span class="exp" style="left:50.5px;top:10.90px"><svg width="8" height="10" viewBox="0 0 8 10" style="display:inline-block;vertical-align:middle;"><path d="M1.6 0.9 L6 5 L1.6 9.1" fill="none" stroke="#555" stroke-width="2.3"/></svg></span><span class="ico" style="left:61.0px;top:10.00px"><svg width="9" height="11" viewBox="0 0 9 11" style="display:inline-block;vertical-align:middle;"><circle cx="4.5" cy="3" r="2.4" fill="none" stroke="#888" stroke-width="0.9"/><path d="M0.6 10.3V8.3c0-1.4 1.1-2.4 2.4-2.4h3c1.3 0 2.4 1 2.4 2.4v2z" fill="none" stroke="#888" stroke-width="0.9"/></svg></span><span class="cell" style="left:72.5px"><span class="z">用户管理</span></span><span class="cell" style="left:499px">1</span><span class="cell" style="left:731px">/system/user</span><span class="lblwrap" style="left:1079px"><span class="lbl ls"><span class="z">菜单</span></span></span><span class="lblwrap" style="left:1310px"><span class="badge"><span class="z">显示</span></span></span><span class="cell" style="left:1542px">system:user:view</span><span class="ops" style="left:1890px"><span class="bx bp"><i style="left:4.3px;top:4.6px"><svg width="9" height="9" viewBox="0 0 9 9" style="display:inline-block;vertical-align:middle;"><path d="M6 1.2H0.7v7.1h7.1V5" fill="none" stroke="#fff" stroke-width="1.1"/><path d="M3.2 6.1l0.4-1.8L7.7 0.2l1.3 1.3L5 5.7z" fill="#fff"/></svg></i><span class="z">编辑</span></span><span class="bx bi"><i style="left:5px;top:4.8px"><svg width="8" height="8" viewBox="0 0 8 8" style="display:inline-block;vertical-align:middle;"><path d="M3 0h2v3h3v2H5v3H3V5H0V3h3z" fill="#fff"/></svg></i><span class="z">新增</span></span><span class="bx bd"><i style="left:3.8px;top:4.4px"><svg width="6" height="9" viewBox="0 0 6 9" style="display:inline-block;vertical-align:middle;"><path d="M1.8 2V1.2a0.8 0.8 0 0 1 0.8-0.8h0.8a0.8 0.8 0 0 1 0.8 0.8V2" fill="none" stroke="#fff" stroke-width="0.9"/><rect x="0" y="2" width="6" height="1" fill="#fff"/><path d="M0.9 3v5.1a0.5 0.5 0 0 0 0.5 0.5h3.2a0.5 0.5 0 0 0 0.5-0.5V3" fill="none" stroke="#fff" stroke-width="1"/><path d="M2.4 4v3.6M3.6 4v3.6" stroke="#fff" stroke-width="0.7"/></svg></i><span class="z">删除</span></span></span></div>
<div class="row" style="top:471.50px;"><span class="radio"></span><span class="exp" style="left:50.5px;top:10.90px"><svg width="8" height="10" viewBox="0 0 8 10" style="display:inline-block;vertical-align:middle;"><path d="M1.6 0.9 L6 5 L1.6 9.1" fill="none" stroke="#555" stroke-width="2.3"/></svg></span><span class="ico" style="left:61.0px;top:10.50px"><svg width="8.5" height="10" viewBox="0 0 8.5 10" style="display:inline-block;vertical-align:middle;"><path d="M1.8 3.2h4.9L5.8 0.5H2.7z" fill="#606264"/><rect x="0.3" y="3.3" width="7.9" height="1" fill="#606264"/><circle cx="4.25" cy="5.2" r="1.4" fill="#606264"/><path d="M0.4 9.7V8.2c0-1.1 0.9-1.8 1.9-1.8h3.9c1 0 1.9 0.7 1.9 1.8v1.5z" fill="#606264"/><path d="M4.25 6.6v3" stroke="#fff" stroke-width="0.7"/></svg></span><span class="cell" style="left:72.6px"><span class="z">角色管理</span></span><span class="cell" style="left:499px">2</span><span class="cell" style="left:731px">/system/role</span><span class="lblwrap" style="left:1079px"><span class="lbl ls"><span class="z">菜单</span></span></span><span class="lblwrap" style="left:1310px"><span class="badge"><span class="z">显示</span></span></span><span class="cell" style="left:1542px">system:role:view</span><span class="ops" style="left:1890px"><span class="bx bp"><i style="left:4.3px;top:4.6px"><svg width="9" height="9" viewBox="0 0 9 9" style="display:inline-block;vertical-align:middle;"><path d="M6 1.2H0.7v7.1h7.1V5" fill="none" stroke="#fff" stroke-width="1.1"/><path d="M3.2 6.1l0.4-1.8L7.7 0.2l1.3 1.3L5 5.7z" fill="#fff"/></svg></i><span class="z">编辑</span></span><span class="bx bi"><i style="left:5px;top:4.8px"><svg width="8" height="8" viewBox="0 0 8 8" style="display:inline-block;vertical-align:middle;"><path d="M3 0h2v3h3v2H5v3H3V5H0V3h3z" fill="#fff"/></svg></i><span class="z">新增</span></span><span class="bx bd"><i style="left:3.8px;top:4.4px"><svg width="6" height="9" viewBox="0 0 6 9" style="display:inline-block;vertical-align:middle;"><path d="M1.8 2V1.2a0.8 0.8 0 0 1 0.8-0.8h0.8a0.8 0.8 0 0 1 0.8 0.8V2" fill="none" stroke="#fff" stroke-width="0.9"/><rect x="0" y="2" width="6" height="1" fill="#fff"/><path d="M0.9 3v5.1a0.5 0.5 0 0 0 0.5 0.5h3.2a0.5 0.5 0 0 0 0.5-0.5V3" fill="none" stroke="#fff" stroke-width="1"/><path d="M2.4 4v3.6M3.6 4v3.6" stroke="#fff" stroke-width="0.7"/></svg></i><span class="z">删除</span></span></span></div>
<div class="row" style="top:503.70px;"><span class="radio"></span><span class="exp" style="left:50.5px;top:10.90px"><svg width="8" height="10" viewBox="0 0 8 10" style="display:inline-block;vertical-align:middle;"><path d="M1.6 0.9 L6 5 L1.6 9.1" fill="none" stroke="#555" stroke-width="2.3"/></svg></span><span class="ico" style="left:61.0px;top:11.00px"><svg width="10.5" height="9" viewBox="0 0 10.5 9" style="display:inline-block;vertical-align:middle;"><rect x="0" y="0.3" width="2.6" height="2.1" fill="#606264"/><rect x="3.4" y="0.3" width="7.1" height="2.1" fill="#606264"/><rect x="0" y="3.5" width="2.6" height="2.1" fill="#606264"/><rect x="3.4" y="3.5" width="7.1" height="2.1" fill="#606264"/><rect x="0" y="6.7" width="2.6" height="2.1" fill="#606264"/><rect x="3.4" y="6.7" width="7.1" height="2.1" fill="#606264"/></svg></span><span class="cell" style="left:74.0px"><span class="z">菜单管理</span></span><span class="cell" style="left:499px">3</span><span class="cell" style="left:731px">/system/menu</span><span class="lblwrap" style="left:1079px"><span class="lbl ls"><span class="z">菜单</span></span></span><span class="lblwrap" style="left:1310px"><span class="badge"><span class="z">显示</span></span></span><span class="cell" style="left:1542px">system:menu:view</span><span class="ops" style="left:1890px"><span class="bx bp"><i style="left:4.3px;top:4.6px"><svg width="9" height="9" viewBox="0 0 9 9" style="display:inline-block;vertical-align:middle;"><path d="M6 1.2H0.7v7.1h7.1V5" fill="none" stroke="#fff" stroke-width="1.1"/><path d="M3.2 6.1l0.4-1.8L7.7 0.2l1.3 1.3L5 5.7z" fill="#fff"/></svg></i><span class="z">编辑</span></span><span class="bx bi"><i style="left:5px;top:4.8px"><svg width="8" height="8" viewBox="0 0 8 8" style="display:inline-block;vertical-align:middle;"><path d="M3 0h2v3h3v2H5v3H3V5H0V3h3z" fill="#fff"/></svg></i><span class="z">新增</span></span><span class="bx bd"><i style="left:3.8px;top:4.4px"><svg width="6" height="9" viewBox="0 0 6 9" style="display:inline-block;vertical-align:middle;"><path d="M1.8 2V1.2a0.8 0.8 0 0 1 0.8-0.8h0.8a0.8 0.8 0 0 1 0.8 0.8V2" fill="none" stroke="#fff" stroke-width="0.9"/><rect x="0" y="2" width="6" height="1" fill="#fff"/><path d="M0.9 3v5.1a0.5 0.5 0 0 0 0.5 0.5h3.2a0.5 0.5 0 0 0 0.5-0.5V3" fill="none" stroke="#fff" stroke-width="1"/><path d="M2.4 4v3.6M3.6 4v3.6" stroke="#fff" stroke-width="0.7"/></svg></i><span class="z">删除</span></span></span></div>
<div class="row" style="top:535.90px;"><span class="radio"></span><span class="exp" style="left:50.5px;top:10.90px"><svg width="8" height="10" viewBox="0 0 8 10" style="display:inline-block;vertical-align:middle;"><path d="M1.6 0.9 L6 5 L1.6 9.1" fill="none" stroke="#555" stroke-width="2.3"/></svg></span><span class="ico" style="left:61.0px;top:11.00px"><svg width="10.5" height="9" viewBox="0 0 10.5 9" style="display:inline-block;vertical-align:middle;"><rect x="0" y="0.3" width="10.5" height="1.5" fill="#606264"/><rect x="3.3" y="2.9" width="7.2" height="1.3" fill="#606264"/><rect x="3.3" y="5.2" width="7.2" height="1.3" fill="#606264"/><rect x="0" y="7.5" width="10.5" height="1.5" fill="#606264"/><path d="M2.4 2.6v4.2L0.3 4.7z" fill="#606264"/></svg></span><span class="cell" style="left:74.3px"><span class="z">部门管理</span></span><span class="cell" style="left:499px">4</span><span class="cell" style="left:731px">/system/dept</span><span class="lblwrap" style="left:1079px"><span class="lbl ls"><span class="z">菜单</span></span></span><span class="lblwrap" style="left:1310px"><span class="badge"><span class="z">显示</span></span></span><span class="cell" style="left:1542px">system:dept:view</span><span class="ops" style="left:1890px"><span class="bx bp"><i style="left:4.3px;top:4.6px"><svg width="9" height="9" viewBox="0 0 9 9" style="display:inline-block;vertical-align:middle;"><path d="M6 1.2H0.7v7.1h7.1V5" fill="none" stroke="#fff" stroke-width="1.1"/><path d="M3.2 6.1l0.4-1.8L7.7 0.2l1.3 1.3L5 5.7z" fill="#fff"/></svg></i><span class="z">编辑</span></span><span class="bx bi"><i style="left:5px;top:4.8px"><svg width="8" height="8" viewBox="0 0 8 8" style="display:inline-block;vertical-align:middle;"><path d="M3 0h2v3h3v2H5v3H3V5H0V3h3z" fill="#fff"/></svg></i><span class="z">新增</span></span><span class="bx bd"><i style="left:3.8px;top:4.4px"><svg width="6" height="9" viewBox="0 0 6 9" style="display:inline-block;vertical-align:middle;"><path d="M1.8 2V1.2a0.8 0.8 0 0 1 0.8-0.8h0.8a0.8 0.8 0 0 1 0.8 0.8V2" fill="none" stroke="#fff" stroke-width="0.9"/><rect x="0" y="2" width="6" height="1" fill="#fff"/><path d="M0.9 3v5.1a0.5 0.5 0 0 0 0.5 0.5h3.2a0.5 0.5 0 0 0 0.5-0.5V3" fill="none" stroke="#fff" stroke-width="1"/><path d="M2.4 4v3.6M3.6 4v3.6" stroke="#fff" stroke-width="0.7"/></svg></i><span class="z">删除</span></span></span></div>
<div class="row" style="top:568.10px;"><span class="radio"></span><span class="exp" style="left:50.5px;top:10.90px"><svg width="8" height="10" viewBox="0 0 8 10" style="display:inline-block;vertical-align:middle;"><path d="M1.6 0.9 L6 5 L1.6 9.1" fill="none" stroke="#555" stroke-width="2.3"/></svg></span><span class="ico" style="left:61.0px;top:11.00px"><svg width="12" height="9" viewBox="0 0 12 9" style="display:inline-block;vertical-align:middle;"><rect x="0.5" y="0.5" width="11" height="8" fill="none" stroke="#606264" stroke-width="1"/><circle cx="3.7" cy="3.6" r="1.2" fill="#606264"/><path d="M1.9 6.9c0-1.2 0.8-1.8 1.8-1.8s1.8 0.6 1.8 1.8z" fill="#606264"/><path d="M6.8 3.2h3.4M6.8 5h3.4" stroke="#999" stroke-width="0.8"/></svg></span><span class="cell" style="left:76.4px"><span class="z">岗位管理</span></span><span class="cell" style="left:499px">5</span><span class="cell" style="left:731px">/system/post</span><span class="lblwrap" style="left:1079px"><span class="lbl ls"><span class="z">菜单</span></span></span><span class="lblwrap" style="left:1310px"><span class="badge"><span class="z">显示</span></span></span><span class="cell" style="left:1542px">system:post:view</span><span class="ops" style="left:1890px"><span class="bx bp"><i style="left:4.3px;top:4.6px"><svg width="9" height="9" viewBox="0 0 9 9" style="display:inline-block;vertical-align:middle;"><path d="M6 1.2H0.7v7.1h7.1V5" fill="none" stroke="#fff" stroke-width="1.1"/><path d="M3.2 6.1l0.4-1.8L7.7 0.2l1.3 1.3L5 5.7z" fill="#fff"/></svg></i><span class="z">编辑</span></span><span class="bx bi"><i style="left:5px;top:4.8px"><svg width="8" height="8" viewBox="0 0 8 8" style="display:inline-block;vertical-align:middle;"><path d="M3 0h2v3h3v2H5v3H3V5H0V3h3z" fill="#fff"/></svg></i><span class="z">新增</span></span><span class="bx bd"><i style="left:3.8px;top:4.4px"><svg width="6" height="9" viewBox="0 0 6 9" style="display:inline-block;vertical-align:middle;"><path d="M1.8 2V1.2a0.8 0.8 0 0 1 0.8-0.8h0.8a0.8 0.8 0 0 1 0.8 0.8V2" fill="none" stroke="#fff" stroke-width="0.9"/><rect x="0" y="2" width="6" height="1" fill="#fff"/><path d="M0.9 3v5.1a0.5 0.5 0 0 0 0.5 0.5h3.2a0.5 0.5 0 0 0 0.5-0.5V3" fill="none" stroke="#fff" stroke-width="1"/><path d="M2.4 4v3.6M3.6 4v3.6" stroke="#fff" stroke-width="0.7"/></svg></i><span class="z">删除</span></span></span></div>
<div class="row" style="top:600.30px;"><span class="radio"></span><span class="exp" style="left:50.5px;top:10.90px"><svg width="8" height="10" viewBox="0 0 8 10" style="display:inline-block;vertical-align:middle;"><path d="M1.6 0.9 L6 5 L1.6 9.1" fill="none" stroke="#555" stroke-width="2.3"/></svg></span><span class="ico" style="left:61.0px;top:10.50px"><svg width="8" height="10" viewBox="0 0 8 10" style="display:inline-block;vertical-align:middle;"><path d="M0.5 0.5h7v9L4 6.4 0.5 9.5z" fill="none" stroke="#888" stroke-width="1"/></svg></span><span class="cell" style="left:70.9px"><span class="z">字典管理</span></span><span class="cell" style="left:499px">6</span><span class="cell" style="left:731px">/system/dict</span><span class="lblwrap" style="left:1079px"><span class="lbl ls"><span class="z">菜单</span></span></span><span class="lblwrap" style="left:1310px"><span class="badge"><span class="z">显示</span></span></span><span class="cell" style="left:1542px">system:dict:view</span><span class="ops" style="left:1890px"><span class="bx bp"><i style="left:4.3px;top:4.6px"><svg width="9" height="9" viewBox="0 0 9 9" style="display:inline-block;vertical-align:middle;"><path d="M6 1.2H0.7v7.1h7.1V5" fill="none" stroke="#fff" stroke-width="1.1"/><path d="M3.2 6.1l0.4-1.8L7.7 0.2l1.3 1.3L5 5.7z" fill="#fff"/></svg></i><span class="z">编辑</span></span><span class="bx bi"><i style="left:5px;top:4.8px"><svg width="8" height="8" viewBox="0 0 8 8" style="display:inline-block;vertical-align:middle;"><path d="M3 0h2v3h3v2H5v3H3V5H0V3h3z" fill="#fff"/></svg></i><span class="z">新增</span></span><span class="bx bd"><i style="left:3.8px;top:4.4px"><svg width="6" height="9" viewBox="0 0 6 9" style="display:inline-block;vertical-align:middle;"><path d="M1.8 2V1.2a0.8 0.8 0 0 1 0.8-0.8h0.8a0.8 0.8 0 0 1 0.8 0.8V2" fill="none" stroke="#fff" stroke-width="0.9"/><rect x="0" y="2" width="6" height="1" fill="#fff"/><path d="M0.9 3v5.1a0.5 0.5 0 0 0 0.5 0.5h3.2a0.5 0.5 0 0 0 0.5-0.5V3" fill="none" stroke="#fff" stroke-width="1"/><path d="M2.4 4v3.6M3.6 4v3.6" stroke="#fff" stroke-width="0.7"/></svg></i><span class="z">删除</span></span></span></div>
<div class="row" style="top:632.50px;"><span class="radio"></span><span class="exp" style="left:50.5px;top:10.90px"><svg width="8" height="10" viewBox="0 0 8 10" style="display:inline-block;vertical-align:middle;"><path d="M1.6 0.9 L6 5 L1.6 9.1" fill="none" stroke="#555" stroke-width="2.3"/></svg></span><span class="ico" style="left:61.5px;top:10.50px"><svg width="9.5" height="10" viewBox="0 0 9.5 10" style="display:inline-block;vertical-align:middle;"><circle cx="4.75" cy="5" r="3.1" fill="none" stroke="#606264" stroke-width="1"/><path d="M4.75 0.2v1.4M4.75 8.4v1.4M0 5h1.4M8.1 5h1.4M1.4 1.7l1 1M7.1 7.3l1 1M1.4 8.3l1-1M7.1 2.7l1-1" stroke="#606264" stroke-width="1"/></svg></span><span class="cell" style="left:74.3px"><span class="z">参数设置</span></span><span class="cell" style="left:499px">7</span><span class="cell" style="left:731px">/system/config</span><span class="lblwrap" style="left:1079px"><span class="lbl ls"><span class="z">菜单</span></span></span><span class="lblwrap" style="left:1310px"><span class="badge"><span class="z">显示</span></span></span><span class="cell" style="left:1542px">system:config:view</span><span class="ops" style="left:1890px"><span class="bx bp"><i style="left:4.3px;top:4.6px"><svg width="9" height="9" viewBox="0 0 9 9" style="display:inline-block;vertical-align:middle;"><path d="M6 1.2H0.7v7.1h7.1V5" fill="none" stroke="#fff" stroke-width="1.1"/><path d="M3.2 6.1l0.4-1.8L7.7 0.2l1.3 1.3L5 5.7z" fill="#fff"/></svg></i><span class="z">编辑</span></span><span class="bx bi"><i style="left:5px;top:4.8px"><svg width="8" height="8" viewBox="0 0 8 8" style="display:inline-block;vertical-align:middle;"><path d="M3 0h2v3h3v2H5v3H3V5H0V3h3z" fill="#fff"/></svg></i><span class="z">新增</span></span><span class="bx bd"><i style="left:3.8px;top:4.4px"><svg width="6" height="9" viewBox="0 0 6 9" style="display:inline-block;vertical-align:middle;"><path d="M1.8 2V1.2a0.8 0.8 0 0 1 0.8-0.8h0.8a0.8 0.8 0 0 1 0.8 0.8V2" fill="none" stroke="#fff" stroke-width="0.9"/><rect x="0" y="2" width="6" height="1" fill="#fff"/><path d="M0.9 3v5.1a0.5 0.5 0 0 0 0.5 0.5h3.2a0.5 0.5 0 0 0 0.5-0.5V3" fill="none" stroke="#fff" stroke-width="1"/><path d="M2.4 4v3.6M3.6 4v3.6" stroke="#fff" stroke-width="0.7"/></svg></i><span class="z">删除</span></span></span></div>
<div class="row" style="top:664.70px;"><span class="radio"></span><span class="exp" style="left:50.5px;top:10.90px"><svg width="8" height="10" viewBox="0 0 8 10" style="display:inline-block;vertical-align:middle;"><path d="M1.6 0.9 L6 5 L1.6 9.1" fill="none" stroke="#555" stroke-width="2.3"/></svg></span><span class="ico" style="left:61.0px;top:11.00px"><svg width="10" height="9" viewBox="0 0 10 9" style="display:inline-block;vertical-align:middle;"><path d="M0.3 2.4h3.4L8.6 0.3v7.6L3.7 5.8H0.3z" fill="#606264"/><path d="M4.4 2.8l3.4-1.3v5.2L4.4 5.4z" fill="#fff"/><path d="M1.4 5.8l0.9 2.9h1.5L3 5.8z" fill="#606264"/><rect x="8.9" y="3.2" width="1.1" height="1.9" fill="#606264"/></svg></span><span class="cell" style="left:74.3px"><span class="z">通知公告</span></span><span class="cell" style="left:499px">8</span><span class="cell" style="left:731px">/system/notice</span><span class="lblwrap" style="left:1079px"><span class="lbl ls"><span class="z">菜单</span></span></span><span class="lblwrap" style="left:1310px"><span class="badge"><span class="z">显示</span></span></span><span class="cell" style="left:1542px">system:notice:view</span><span class="ops" style="left:1890px"><span class="bx bp"><i style="left:4.3px;top:4.6px"><svg width="9" height="9" viewBox="0 0 9 9" style="display:inline-block;vertical-align:middle;"><path d="M6 1.2H0.7v7.1h7.1V5" fill="none" stroke="#fff" stroke-width="1.1"/><path d="M3.2 6.1l0.4-1.8L7.7 0.2l1.3 1.3L5 5.7z" fill="#fff"/></svg></i><span class="z">编辑</span></span><span class="bx bi"><i style="left:5px;top:4.8px"><svg width="8" height="8" viewBox="0 0 8 8" style="display:inline-block;vertical-align:middle;"><path d="M3 0h2v3h3v2H5v3H3V5H0V3h3z" fill="#fff"/></svg></i><span class="z">新增</span></span><span class="bx bd"><i style="left:3.8px;top:4.4px"><svg width="6" height="9" viewBox="0 0 6 9" style="display:inline-block;vertical-align:middle;"><path d="M1.8 2V1.2a0.8 0.8 0 0 1 0.8-0.8h0.8a0.8 0.8 0 0 1 0.8 0.8V2" fill="none" stroke="#fff" stroke-width="0.9"/><rect x="0" y="2" width="6" height="1" fill="#fff"/><path d="M0.9 3v5.1a0.5 0.5 0 0 0 0.5 0.5h3.2a0.5 0.5 0 0 0 0.5-0.5V3" fill="none" stroke="#fff" stroke-width="1"/><path d="M2.4 4v3.6M3.6 4v3.6" stroke="#fff" stroke-width="0.7"/></svg></i><span class="z">删除</span></span></span></div>
<div class="row" style="top:696.90px;"><span class="radio"></span><span class="exp" style="left:50.5px;top:10.90px"><svg width="8" height="10" viewBox="0 0 8 10" style="display:inline-block;vertical-align:middle;"><path d="M1.6 0.9 L6 5 L1.6 9.1" fill="none" stroke="#555" stroke-width="2.3"/></svg></span><span class="ico" style="left:61.0px;top:10.50px"><svg width="10" height="10" viewBox="0 0 10 10" style="display:inline-block;vertical-align:middle;"><path d="M7 1.4H0.6v8h8V5.6" fill="none" stroke="#777" stroke-width="1"/><path d="M3.4 6.8l0.5-2L8.1 0.6l1.4 1.4L5.3 6.2z" fill="none" stroke="#606264" stroke-width="0.9"/></svg></span><span class="cell" style="left:75.0px"><span class="z">日志管理</span></span><span class="cell" style="left:499px">9</span><span class="cell" style="left:731px">#</span><span class="lblwrap" style="left:1079px"><span class="lbl lp"><span class="z">目录</span></span></span><span class="lblwrap" style="left:1310px"><span class="badge"><span class="z">显示</span></span></span><span class="cell" style="left:1542px">-</span><span class="ops" style="left:1890px"><span class="bx bp"><i style="left:4.3px;top:4.6px"><svg width="9" height="9" viewBox="0 0 9 9" style="display:inline-block;vertical-align:middle;"><path d="M6 1.2H0.7v7.1h7.1V5" fill="none" stroke="#fff" stroke-width="1.1"/><path d="M3.2 6.1l0.4-1.8L7.7 0.2l1.3 1.3L5 5.7z" fill="#fff"/></svg></i><span class="z">编辑</span></span><span class="bx bi"><i style="left:5px;top:4.8px"><svg width="8" height="8" viewBox="0 0 8 8" style="display:inline-block;vertical-align:middle;"><path d="M3 0h2v3h3v2H5v3H3V5H0V3h3z" fill="#fff"/></svg></i><span class="z">新增</span></span><span class="bx bd"><i style="left:3.8px;top:4.4px"><svg width="6" height="9" viewBox="0 0 6 9" style="display:inline-block;vertical-align:middle;"><path d="M1.8 2V1.2a0.8 0.8 0 0 1 0.8-0.8h0.8a0.8 0.8 0 0 1 0.8 0.8V2" fill="none" stroke="#fff" stroke-width="0.9"/><rect x="0" y="2" width="6" height="1" fill="#fff"/><path d="M0.9 3v5.1a0.5 0.5 0 0 0 0.5 0.5h3.2a0.5 0.5 0 0 0 0.5-0.5V3" fill="none" stroke="#fff" stroke-width="1"/><path d="M2.4 4v3.6M3.6 4v3.6" stroke="#fff" stroke-width="0.7"/></svg></i><span class="z">删除</span></span></span></div>
<div class="row" style="top:729.10px;background:#f5f5f5;"><span class="radio"></span><span class="exp" style="left:35.0px;top:10.50px"><svg width="10" height="7" viewBox="0 0 10 7" style="display:inline-block;vertical-align:middle;"><path d="M1 1.3 L5 5.4 L9 1.3" fill="none" stroke="#555" stroke-width="2.4"/></svg></span><span class="ico" style="left:48.3px;top:11.50px"><svg width="10.5" height="8" viewBox="0 0 10.5 8" style="display:inline-block;vertical-align:middle;"><rect x="0" y="0.8" width="7" height="6.4" rx="1" fill="#606264"/><path d="M7.3 3.3l3.2-2.3v6L7.3 4.7z" fill="#606264"/></svg></span><span class="cell" style="left:61.5px"><span class="z">系统监控</span></span><span class="cell" style="left:499px">2</span><span class="cell" style="left:731px">#</span><span class="lblwrap" style="left:1079px"><span class="lbl lp"><span class="z">目录</span></span></span><span class="lblwrap" style="left:1310px"><span class="badge"><span class="z">显示</span></span></span><span class="cell" style="left:1542px">-</span><span class="ops" style="left:1890px"><span class="bx bp"><i style="left:4.3px;top:4.6px"><svg width="9" height="9" viewBox="0 0 9 9" style="display:inline-block;vertical-align:middle;"><path d="M6 1.2H0.7v7.1h7.1V5" fill="none" stroke="#fff" stroke-width="1.1"/><path d="M3.2 6.1l0.4-1.8L7.7 0.2l1.3 1.3L5 5.7z" fill="#fff"/></svg></i><span class="z">编辑</span></span><span class="bx bi"><i style="left:5px;top:4.8px"><svg width="8" height="8" viewBox="0 0 8 8" style="display:inline-block;vertical-align:middle;"><path d="M3 0h2v3h3v2H5v3H3V5H0V3h3z" fill="#fff"/></svg></i><span class="z">新增</span></span><span class="bx bd"><i style="left:3.8px;top:4.4px"><svg width="6" height="9" viewBox="0 0 6 9" style="display:inline-block;vertical-align:middle;"><path d="M1.8 2V1.2a0.8 0.8 0 0 1 0.8-0.8h0.8a0.8 0.8 0 0 1 0.8 0.8V2" fill="none" stroke="#fff" stroke-width="0.9"/><rect x="0" y="2" width="6" height="1" fill="#fff"/><path d="M0.9 3v5.1a0.5 0.5 0 0 0 0.5 0.5h3.2a0.5 0.5 0 0 0 0.5-0.5V3" fill="none" stroke="#fff" stroke-width="1"/><path d="M2.4 4v3.6M3.6 4v3.6" stroke="#fff" stroke-width="0.7"/></svg></i><span class="z">删除</span></span></span></div>
<div class="row" style="top:761.30px;"><span class="radio"></span><span class="exp" style="left:50.5px;top:10.90px"><svg width="8" height="10" viewBox="0 0 8 10" style="display:inline-block;vertical-align:middle;"><path d="M1.6 0.9 L6 5 L1.6 9.1" fill="none" stroke="#555" stroke-width="2.3"/></svg></span><span class="ico" style="left:61.0px;top:10.50px"><svg width="10" height="10" viewBox="0 0 10 10" style="display:inline-block;vertical-align:middle;"><circle cx="5" cy="5" r="4.4" fill="none" stroke="#606264" stroke-width="1.1"/><circle cx="5" cy="3.9" r="1.7" fill="#606264"/><path d="M2.2 8.2c0.7-1.3 1.6-1.8 2.8-1.8s2.1 0.5 2.8 1.8" fill="#606264"/></svg></span><span class="cell" style="left:74.1px"><span class="z">在线用户</span></span><span class="cell" style="left:499px">1</span><span class="cell" style="left:731px">/monitor/online</span><span class="lblwrap" style="left:1079px"><span class="lbl ls"><span class="z">菜单</span></span></span><span class="lblwrap" style="left:1310px"><span class="badge"><span class="z">显示</span></span></span><span class="cell" style="left:1542px">monitor:online:view</span><span class="ops" style="left:1890px"><span class="bx bp"><i style="left:4.3px;top:4.6px"><svg width="9" height="9" viewBox="0 0 9 9" style="display:inline-block;vertical-align:middle;"><path d="M6 1.2H0.7v7.1h7.1V5" fill="none" stroke="#fff" stroke-width="1.1"/><path d="M3.2 6.1l0.4-1.8L7.7 0.2l1.3 1.3L5 5.7z" fill="#fff"/></svg></i><span class="z">编辑</span></span><span class="bx bi"><i style="left:5px;top:4.8px"><svg width="8" height="8" viewBox="0 0 8 8" style="display:inline-block;vertical-align:middle;"><path d="M3 0h2v3h3v2H5v3H3V5H0V3h3z" fill="#fff"/></svg></i><span class="z">新增</span></span><span class="bx bd"><i style="left:3.8px;top:4.4px"><svg width="6" height="9" viewBox="0 0 6 9" style="display:inline-block;vertical-align:middle;"><path d="M1.8 2V1.2a0.8 0.8 0 0 1 0.8-0.8h0.8a0.8 0.8 0 0 1 0.8 0.8V2" fill="none" stroke="#fff" stroke-width="0.9"/><rect x="0" y="2" width="6" height="1" fill="#fff"/><path d="M0.9 3v5.1a0.5 0.5 0 0 0 0.5 0.5h3.2a0.5 0.5 0 0 0 0.5-0.5V3" fill="none" stroke="#fff" stroke-width="1"/><path d="M2.4 4v3.6M3.6 4v3.6" stroke="#fff" stroke-width="0.7"/></svg></i><span class="z">删除</span></span></span></div>
<div class="row" style="top:793.50px;"><span class="radio"></span><span class="exp" style="left:50.5px;top:10.90px"><svg width="8" height="10" viewBox="0 0 8 10" style="display:inline-block;vertical-align:middle;"><path d="M1.6 0.9 L6 5 L1.6 9.1" fill="none" stroke="#555" stroke-width="2.3"/></svg></span><span class="ico" style="left:61.0px;top:11.00px"><svg width="10.5" height="9" viewBox="0 0 10.5 9" style="display:inline-block;vertical-align:middle;"><rect x="0" y="0.3" width="10.5" height="2.1" fill="#606264"/><rect x="0" y="3.5" width="10.5" height="2.1" fill="#606264"/><rect x="0" y="6.7" width="10.5" height="2.1" fill="#606264"/><rect x="6.6" y="0.8" width="3.2" height="1.1" fill="#fff"/><rect x="3" y="4" width="6.8" height="1.1" fill="#fff"/><rect x="4.8" y="7.2" width="5" height="1.1" fill="#fff"/></svg></span><span class="cell" style="left:74.1px"><span class="z">定时任务</span></span><span class="cell" style="left:499px">2</span><span class="cell" style="left:731px">/monitor/job</span><span class="lblwrap" style="left:1079px"><span class="lbl ls"><span class="z">菜单</span></span></span><span class="lblwrap" style="left:1310px"><span class="badge"><span class="z">显示</span></span></span><span class="cell" style="left:1542px">monitor:job:view</span><span class="ops" style="left:1890px"><span class="bx bp"><i style="left:4.3px;top:4.6px"><svg width="9" height="9" viewBox="0 0 9 9" style="display:inline-block;vertical-align:middle;"><path d="M6 1.2H0.7v7.1h7.1V5" fill="none" stroke="#fff" stroke-width="1.1"/><path d="M3.2 6.1l0.4-1.8L7.7 0.2l1.3 1.3L5 5.7z" fill="#fff"/></svg></i><span class="z">编辑</span></span><span class="bx bi"><i style="left:5px;top:4.8px"><svg width="8" height="8" viewBox="0 0 8 8" style="display:inline-block;vertical-align:middle;"><path d="M3 0h2v3h3v2H5v3H3V5H0V3h3z" fill="#fff"/></svg></i><span class="z">新增</span></span><span class="bx bd"><i style="left:3.8px;top:4.4px"><svg width="6" height="9" viewBox="0 0 6 9" style="display:inline-block;vertical-align:middle;"><path d="M1.8 2V1.2a0.8 0.8 0 0 1 0.8-0.8h0.8a0.8 0.8 0 0 1 0.8 0.8V2" fill="none" stroke="#fff" stroke-width="0.9"/><rect x="0" y="2" width="6" height="1" fill="#fff"/><path d="M0.9 3v5.1a0.5 0.5 0 0 0 0.5 0.5h3.2a0.5 0.5 0 0 0 0.5-0.5V3" fill="none" stroke="#fff" stroke-width="1"/><path d="M2.4 4v3.6M3.6 4v3.6" stroke="#fff" stroke-width="0.7"/></svg></i><span class="z">删除</span></span></span></div>
<div class="row" style="top:825.70px;"><span class="radio"></span><span class="ico" style="left:61.5px;top:11.00px"><svg width="8.5" height="9" viewBox="0 0 8.5 9" style="display:inline-block;vertical-align:middle;"><ellipse cx="4.25" cy="5.5" rx="2.3" ry="3.2" fill="#606264"/><path d="M2.3 2.3a1.95 1.4 0 0 1 3.9 0z" fill="#606264"/><path d="M0.2 3.4l1.8 1M8.3 3.4l-1.8 1M0 5.8h1.9M6.6 5.8h1.9M0.4 8.6l1.6-1.2M8.1 8.6l-1.6-1.2" stroke="#606264" stroke-width="0.9"/><path d="M4.25 3v5.8" stroke="#fff" stroke-width="0.5"/></svg></span><span class="cell" style="left:73.0px"><span class="z">数据监控</span></span><span class="cell" style="left:499px">3</span><span class="cell" style="left:731px">/monitor/data</span><span class="lblwrap" style="left:1079px"><span class="lbl ls"><span class="z">菜单</span></span></span><span class="lblwrap" style="left:1310px"><span class="badge"><span class="z">显示</span></span></span><span class="cell" style="left:1542px">monitor:data:view</span><span class="ops" style="left:1890px"><span class="bx bp"><i style="left:4.3px;top:4.6px"><svg width="9" height="9" viewBox="0 0 9 9" style="display:inline-block;vertical-align:middle;"><path d="M6 1.2H0.7v7.1h7.1V5" fill="none" stroke="#fff" stroke-width="1.1"/><path d="M3.2 6.1l0.4-1.8L7.7 0.2l1.3 1.3L5 5.7z" fill="#fff"/></svg></i><span class="z">编辑</span></span><span class="bx bi"><i style="left:5px;top:4.8px"><svg width="8" height="8" viewBox="0 0 8 8" style="display:inline-block;vertical-align:middle;"><path d="M3 0h2v3h3v2H5v3H3V5H0V3h3z" fill="#fff"/></svg></i><span class="z">新增</span></span><span class="bx bd"><i style="left:3.8px;top:4.4px"><svg width="6" height="9" viewBox="0 0 6 9" style="display:inline-block;vertical-align:middle;"><path d="M1.8 2V1.2a0.8 0.8 0 0 1 0.8-0.8h0.8a0.8 0.8 0 0 1 0.8 0.8V2" fill="none" stroke="#fff" stroke-width="0.9"/><rect x="0" y="2" width="6" height="1" fill="#fff"/><path d="M0.9 3v5.1a0.5 0.5 0 0 0 0.5 0.5h3.2a0.5 0.5 0 0 0 0.5-0.5V3" fill="none" stroke="#fff" stroke-width="1"/><path d="M2.4 4v3.6M3.6 4v3.6" stroke="#fff" stroke-width="0.7"/></svg></i><span class="z">删除</span></span></span></div>
<div class="row" style="top:857.90px;"><span class="radio"></span><span class="ico" style="left:61.0px;top:11.00px"><svg width="10" height="9" viewBox="0 0 10 9" style="display:inline-block;vertical-align:middle;"><rect x="0" y="0.2" width="10" height="2.3" fill="#606264"/><rect x="0" y="3.35" width="10" height="2.3" fill="#606264"/><rect x="0" y="6.5" width="10" height="2.3" fill="#606264"/><rect x="7" y="0.9" width="2" height="0.9" fill="#fff"/><rect x="7" y="4.05" width="2" height="0.9" fill="#fff"/><rect x="7" y="7.2" width="2" height="0.9" fill="#fff"/></svg></span><span class="cell" style="left:74.1px"><span class="z">服务监控</span></span><span class="cell" style="left:499px">4</span><span class="cell" style="left:731px">/monitor/server</span><span class="lblwrap" style="left:1079px"><span class="lbl ls"><span class="z">菜单</span></span></span><span class="lblwrap" style="left:1310px"><span class="badge"><span class="z">显示</span></span></span><span class="cell" style="left:1542px">monitor:server:view</span><span class="ops" style="left:1890px"><span class="bx bp"><i style="left:4.3px;top:4.6px"><svg width="9" height="9" viewBox="0 0 9 9" style="display:inline-block;vertical-align:middle;"><path d="M6 1.2H0.7v7.1h7.1V5" fill="none" stroke="#fff" stroke-width="1.1"/><path d="M3.2 6.1l0.4-1.8L7.7 0.2l1.3 1.3L5 5.7z" fill="#fff"/></svg></i><span class="z">编辑</span></span><span class="bx bi"><i style="left:5px;top:4.8px"><svg width="8" height="8" viewBox="0 0 8 8" style="display:inline-block;vertical-align:middle;"><path d="M3 0h2v3h3v2H5v3H3V5H0V3h3z" fill="#fff"/></svg></i><span class="z">新增</span></span><span class="bx bd"><i style="left:3.8px;top:4.4px"><svg width="6" height="9" viewBox="0 0 6 9" style="display:inline-block;vertical-align:middle;"><path d="M1.8 2V1.2a0.8 0.8 0 0 1 0.8-0.8h0.8a0.8 0.8 0 0 1 0.8 0.8V2" fill="none" stroke="#fff" stroke-width="0.9"/><rect x="0" y="2" width="6" height="1" fill="#fff"/><path d="M0.9 3v5.1a0.5 0.5 0 0 0 0.5 0.5h3.2a0.5 0.5 0 0 0 0.5-0.5V3" fill="none" stroke="#fff" stroke-width="1"/><path d="M2.4 4v3.6M3.6 4v3.6" stroke="#fff" stroke-width="0.7"/></svg></i><span class="z">删除</span></span></span></div>
<div class="row" style="top:890.10px;"><span class="radio"></span><span class="ico" style="left:61.0px;top:10.50px"><svg width="10" height="10" viewBox="0 0 10 10" style="display:inline-block;vertical-align:middle;"><path d="M5 0.3l4.6 1.9v5.6L5 9.8 0.4 7.8V2.2z" fill="#606264"/><path d="M5 4.3v5.3M0.6 2.3L5 4.2l4.4-1.9" fill="none" stroke="#fff" stroke-width="0.7"/><path d="M5.4 4.6l3.8-1.7v4.6L5.4 9.2z" fill="#aaa"/></svg></span><span class="cell" style="left:74.1px"><span class="z">缓存监控</span></span><span class="cell" style="left:499px">5</span><span class="cell" style="left:731px">/monitor/cache</span><span class="lblwrap" style="left:1079px"><span class="lbl ls"><span class="z">菜单</span></span></span><span class="lblwrap" style="left:1310px"><span class="badge"><span class="z">显示</span></span></span><span class="cell" style="left:1542px">monitor:cache:view</span><span class="ops" style="left:1890px"><span class="bx bp"><i style="left:4.3px;top:4.6px"><svg width="9" height="9" viewBox="0 0 9 9" style="display:inline-block;vertical-align:middle;"><path d="M6 1.2H0.7v7.1h7.1V5" fill="none" stroke="#fff" stroke-width="1.1"/><path d="M3.2 6.1l0.4-1.8L7.7 0.2l1.3 1.3L5 5.7z" fill="#fff"/></svg></i><span class="z">编辑</span></span><span class="bx bi"><i style="left:5px;top:4.8px"><svg width="8" height="8" viewBox="0 0 8 8" style="display:inline-block;vertical-align:middle;"><path d="M3 0h2v3h3v2H5v3H3V5H0V3h3z" fill="#fff"/></svg></i><span class="z">新增</span></span><span class="bx bd"><i style="left:3.8px;top:4.4px"><svg width="6" height="9" viewBox="0 0 6 9" style="display:inline-block;vertical-align:middle;"><path d="M1.8 2V1.2a0.8 0.8 0 0 1 0.8-0.8h0.8a0.8 0.8 0 0 1 0.8 0.8V2" fill="none" stroke="#fff" stroke-width="0.9"/><rect x="0" y="2" width="6" height="1" fill="#fff"/><path d="M0.9 3v5.1a0.5 0.5 0 0 0 0.5 0.5h3.2a0.5 0.5 0 0 0 0.5-0.5V3" fill="none" stroke="#fff" stroke-width="1"/><path d="M2.4 4v3.6M3.6 4v3.6" stroke="#fff" stroke-width="0.7"/></svg></i><span class="z">删除</span></span></span></div>
<div class="row" style="top:922.30px;"><span class="radio"></span><span class="exp" style="left:35.0px;top:10.50px"><svg width="10" height="7" viewBox="0 0 10 7" style="display:inline-block;vertical-align:middle;"><path d="M1 1.3 L5 5.4 L9 1.3" fill="none" stroke="#555" stroke-width="2.4"/></svg></span><span class="ico" style="left:48.3px;top:11.50px"><svg width="8.5" height="8" viewBox="0 0 8.5 8" style="display:inline-block;vertical-align:middle;"><rect x="0" y="0.6" width="8.5" height="1.1" fill="#606264"/><rect x="0" y="3.45" width="8.5" height="1.1" fill="#606264"/><rect x="0" y="6.3" width="8.5" height="1.1" fill="#606264"/></svg></span><span class="cell" style="left:59.9px"><span class="z">系统工具</span></span><span class="cell" style="left:499px">3</span><span class="cell" style="left:731px">#</span><span class="lblwrap" style="left:1079px"><span class="lbl lp"><span class="z">目录</span></span></span><span class="lblwrap" style="left:1310px"><span class="badge"><span class="z">显示</span></span></span><span class="cell" style="left:1542px">-</span><span class="ops" style="left:1890px"><span class="bx bp"><i style="left:4.3px;top:4.6px"><svg width="9" height="9" viewBox="0 0 9 9" style="display:inline-block;vertical-align:middle;"><path d="M6 1.2H0.7v7.1h7.1V5" fill="none" stroke="#fff" stroke-width="1.1"/><path d="M3.2 6.1l0.4-1.8L7.7 0.2l1.3 1.3L5 5.7z" fill="#fff"/></svg></i><span class="z">编辑</span></span><span class="bx bi"><i style="left:5px;top:4.8px"><svg width="8" height="8" viewBox="0 0 8 8" style="display:inline-block;vertical-align:middle;"><path d="M3 0h2v3h3v2H5v3H3V5H0V3h3z" fill="#fff"/></svg></i><span class="z">新增</span></span><span class="bx bd"><i style="left:3.8px;top:4.4px"><svg width="6" height="9" viewBox="0 0 6 9" style="display:inline-block;vertical-align:middle;"><path d="M1.8 2V1.2a0.8 0.8 0 0 1 0.8-0.8h0.8a0.8 0.8 0 0 1 0.8 0.8V2" fill="none" stroke="#fff" stroke-width="0.9"/><rect x="0" y="2" width="6" height="1" fill="#fff"/><path d="M0.9 3v5.1a0.5 0.5 0 0 0 0.5 0.5h3.2a0.5 0.5 0 0 0 0.5-0.5V3" fill="none" stroke="#fff" stroke-width="1"/><path d="M2.4 4v3.6M3.6 4v3.6" stroke="#fff" stroke-width="0.7"/></svg></i><span class="z">删除</span></span></span></div>
<div class="row" style="top:954.50px;"><span class="radio"></span><span class="ico" style="left:61.0px;top:10.50px"><svg width="9" height="10" viewBox="0 0 9 10" style="display:inline-block;vertical-align:middle;"><rect x="0.5" y="0.5" width="8" height="9" rx="0.5" fill="none" stroke="#777" stroke-width="1"/><path d="M2 2.8h1M4 2.8h3M2 5h1M4 5h3M2 7.3h5" stroke="#888" stroke-width="0.8"/></svg></span><span class="cell" style="left:72.3px"><span class="z">表单构建</span></span><span class="cell" style="left:499px">1</span><span class="cell" style="left:731px">/tool/build</span><span class="lblwrap" style="left:1079px"><span class="lbl ls"><span class="z">菜单</span></span></span><span class="lblwrap" style="left:1310px"><span class="badge"><span class="z">显示</span></span></span><span class="cell" style="left:1542px">tool:build:view</span><span class="ops" style="left:1890px"><span class="bx bp"><i style="left:4.3px;top:4.6px"><svg width="9" height="9" viewBox="0 0 9 9" style="display:inline-block;vertical-align:middle;"><path d="M6 1.2H0.7v7.1h7.1V5" fill="none" stroke="#fff" stroke-width="1.1"/><path d="M3.2 6.1l0.4-1.8L7.7 0.2l1.3 1.3L5 5.7z" fill="#fff"/></svg></i><span class="z">编辑</span></span><span class="bx bi"><i style="left:5px;top:4.8px"><svg width="8" height="8" viewBox="0 0 8 8" style="display:inline-block;vertical-align:middle;"><path d="M3 0h2v3h3v2H5v3H3V5H0V3h3z" fill="#fff"/></svg></i><span class="z">新增</span></span><span class="bx bd"><i style="left:3.8px;top:4.4px"><svg width="6" height="9" viewBox="0 0 6 9" style="display:inline-block;vertical-align:middle;"><path d="M1.8 2V1.2a0.8 0.8 0 0 1 0.8-0.8h0.8a0.8 0.8 0 0 1 0.8 0.8V2" fill="none" stroke="#fff" stroke-width="0.9"/><rect x="0" y="2" width="6" height="1" fill="#fff"/><path d="M0.9 3v5.1a0.5 0.5 0 0 0 0.5 0.5h3.2a0.5 0.5 0 0 0 0.5-0.5V3" fill="none" stroke="#fff" stroke-width="1"/><path d="M2.4 4v3.6M3.6 4v3.6" stroke="#fff" stroke-width="0.7"/></svg></i><span class="z">删除</span></span></span></div>
<div class="row" style="top:986.70px;background:#f5f5f5;"><span class="radio sel"></span><span class="exp" style="left:47.8px;top:10.50px"><svg width="10" height="7" viewBox="0 0 10 7" style="display:inline-block;vertical-align:middle;"><path d="M1 1.3 L5 5.4 L9 1.3" fill="none" stroke="#555" stroke-width="2.4"/></svg></span><span class="ico" style="left:61.5px;top:11.00px"><svg width="10" height="9" viewBox="0 0 10 9" style="display:inline-block;vertical-align:middle;"><path d="M2.8 2.2L0.6 4.5l2.2 2.3M7.2 2.2l2.2 2.3-2.2 2.3M5.9 1l-1.8 7" fill="none" stroke="#606264" stroke-width="0.95"/></svg></span><span class="cell" style="left:74.6px"><span class="z">代码生成</span></span><span class="cell" style="left:499px">2</span><span class="cell" style="left:731px">/tool/gen</span><span class="lblwrap" style="left:1079px"><span class="lbl ls"><span class="z">菜单</span></span></span><span class="lblwrap" style="left:1310px"><span class="badge"><span class="z">显示</span></span></span><span class="cell" style="left:1542px">tool:gen:view</span><span class="ops" style="left:1890px"><span class="bx bp"><i style="left:4.3px;top:4.6px"><svg width="9" height="9" viewBox="0 0 9 9" style="display:inline-block;vertical-align:middle;"><path d="M6 1.2H0.7v7.1h7.1V5" fill="none" stroke="#fff" stroke-width="1.1"/><path d="M3.2 6.1l0.4-1.8L7.7 0.2l1.3 1.3L5 5.7z" fill="#fff"/></svg></i><span class="z">编辑</span></span><span class="bx bi"><i style="left:5px;top:4.8px"><svg width="8" height="8" viewBox="0 0 8 8" style="display:inline-block;vertical-align:middle;"><path d="M3 0h2v3h3v2H5v3H3V5H0V3h3z" fill="#fff"/></svg></i><span class="z">新增</span></span><span class="bx bd"><i style="left:3.8px;top:4.4px"><svg width="6" height="9" viewBox="0 0 6 9" style="display:inline-block;vertical-align:middle;"><path d="M1.8 2V1.2a0.8 0.8 0 0 1 0.8-0.8h0.8a0.8 0.8 0 0 1 0.8 0.8V2" fill="none" stroke="#fff" stroke-width="0.9"/><rect x="0" y="2" width="6" height="1" fill="#fff"/><path d="M0.9 3v5.1a0.5 0.5 0 0 0 0.5 0.5h3.2a0.5 0.5 0 0 0 0.5-0.5V3" fill="none" stroke="#fff" stroke-width="1"/><path d="M2.4 4v3.6M3.6 4v3.6" stroke="#fff" stroke-width="0.7"/></svg></i><span class="z">删除</span></span></span></div>
<div class="row" style="top:1018.90px;"><span class="radio"></span><span class="cell" style="left:76.2px"><span class="z">生成查询</span></span><span class="cell" style="left:499px">1</span><span class="cell" style="left:731px">#</span><span class="lblwrap" style="left:1079px"><span class="lbl lw"><span class="z">按钮</span></span></span><span class="cell" style="left:1311px">-</span><span class="cell" style="left:1542px">tool:gen:list</span><span class="ops" style="left:1890px"><span class="bx bp"><i style="left:4.3px;top:4.6px"><svg width="9" height="9" viewBox="0 0 9 9" style="display:inline-block;vertical-align:middle;"><path d="M6 1.2H0.7v7.1h7.1V5" fill="none" stroke="#fff" stroke-width="1.1"/><path d="M3.2 6.1l0.4-1.8L7.7 0.2l1.3 1.3L5 5.7z" fill="#fff"/></svg></i><span class="z">编辑</span></span><span class="bx bi"><i style="left:5px;top:4.8px"><svg width="8" height="8" viewBox="0 0 8 8" style="display:inline-block;vertical-align:middle;"><path d="M3 0h2v3h3v2H5v3H3V5H0V3h3z" fill="#fff"/></svg></i><span class="z">新增</span></span><span class="bx bd"><i style="left:3.8px;top:4.4px"><svg width="6" height="9" viewBox="0 0 6 9" style="display:inline-block;vertical-align:middle;"><path d="M1.8 2V1.2a0.8 0.8 0 0 1 0.8-0.8h0.8a0.8 0.8 0 0 1 0.8 0.8V2" fill="none" stroke="#fff" stroke-width="0.9"/><rect x="0" y="2" width="6" height="1" fill="#fff"/><path d="M0.9 3v5.1a0.5 0.5 0 0 0 0.5 0.5h3.2a0.5 0.5 0 0 0 0.5-0.5V3" fill="none" stroke="#fff" stroke-width="1"/><path d="M2.4 4v3.6M3.6 4v3.6" stroke="#fff" stroke-width="0.7"/></svg></i><span class="z">删除</span></span></span></div>
<div class="row" style="top:1051.10px;"><span class="radio"></span><span class="cell" style="left:76.2px"><span class="z">生成修改</span></span><span class="cell" style="left:499px">2</span><span class="cell" style="left:731px">#</span><span class="lblwrap" style="left:1079px"><span class="lbl lw"><span class="z">按钮</span></span></span><span class="cell" style="left:1311px">-</span><span class="cell" style="left:1542px">tool:gen:edit</span><span class="ops" style="left:1890px"><span class="bx bp"><i style="left:4.3px;top:4.6px"><svg width="9" height="9" viewBox="0 0 9 9" style="display:inline-block;vertical-align:middle;"><path d="M6 1.2H0.7v7.1h7.1V5" fill="none" stroke="#fff" stroke-width="1.1"/><path d="M3.2 6.1l0.4-1.8L7.7 0.2l1.3 1.3L5 5.7z" fill="#fff"/></svg></i><span class="z">编辑</span></span><span class="bx bi"><i style="left:5px;top:4.8px"><svg width="8" height="8" viewBox="0 0 8 8" style="display:inline-block;vertical-align:middle;"><path d="M3 0h2v3h3v2H5v3H3V5H0V3h3z" fill="#fff"/></svg></i><span class="z">新增</span></span><span class="bx bd"><i style="left:3.8px;top:4.4px"><svg width="6" height="9" viewBox="0 0 6 9" style="display:inline-block;vertical-align:middle;"><path d="M1.8 2V1.2a0.8 0.8 0 0 1 0.8-0.8h0.8a0.8 0.8 0 0 1 0.8 0.8V2" fill="none" stroke="#fff" stroke-width="0.9"/><rect x="0" y="2" width="6" height="1" fill="#fff"/><path d="M0.9 3v5.1a0.5 0.5 0 0 0 0.5 0.5h3.2a0.5 0.5 0 0 0 0.5-0.5V3" fill="none" stroke="#fff" stroke-width="1"/><path d="M2.4 4v3.6M3.6 4v3.6" stroke="#fff" stroke-width="0.7"/></svg></i><span class="z">删除</span></span></span></div>
<div class="row" style="top:1083.30px;"><span class="radio"></span><span class="cell" style="left:76.2px"><span class="z">生成删除</span></span><span class="cell" style="left:499px">3</span><span class="cell" style="left:731px">#</span><span class="lblwrap" style="left:1079px"><span class="lbl lw"><span class="z">按钮</span></span></span><span class="cell" style="left:1311px">-</span><span class="cell" style="left:1542px">tool:gen:remove</span><span class="ops" style="left:1890px"><span class="bx bp"><i style="left:4.3px;top:4.6px"><svg width="9" height="9" viewBox="0 0 9 9" style="display:inline-block;vertical-align:middle;"><path d="M6 1.2H0.7v7.1h7.1V5" fill="none" stroke="#fff" stroke-width="1.1"/><path d="M3.2 6.1l0.4-1.8L7.7 0.2l1.3 1.3L5 5.7z" fill="#fff"/></svg></i><span class="z">编辑</span></span><span class="bx bi"><i style="left:5px;top:4.8px"><svg width="8" height="8" viewBox="0 0 8 8" style="display:inline-block;vertical-align:middle;"><path d="M3 0h2v3h3v2H5v3H3V5H0V3h3z" fill="#fff"/></svg></i><span class="z">新增</span></span><span class="bx bd"><i style="left:3.8px;top:4.4px"><svg width="6" height="9" viewBox="0 0 6 9" style="display:inline-block;vertical-align:middle;"><path d="M1.8 2V1.2a0.8 0.8 0 0 1 0.8-0.8h0.8a0.8 0.8 0 0 1 0.8 0.8V2" fill="none" stroke="#fff" stroke-width="0.9"/><rect x="0" y="2" width="6" height="1" fill="#fff"/><path d="M0.9 3v5.1a0.5 0.5 0 0 0 0.5 0.5h3.2a0.5 0.5 0 0 0 0.5-0.5V3" fill="none" stroke="#fff" stroke-width="1"/><path d="M2.4 4v3.6M3.6 4v3.6" stroke="#fff" stroke-width="0.7"/></svg></i><span class="z">删除</span></span></span></div>
<div class="row" style="top:1115.50px;"><span class="radio"></span><span class="cell" style="left:76.2px"><span class="z">预览代码</span></span><span class="cell" style="left:499px">4</span><span class="cell" style="left:731px">#</span><span class="lblwrap" style="left:1079px"><span class="lbl lw"><span class="z">按钮</span></span></span><span class="cell" style="left:1311px">-</span><span class="cell" style="left:1542px">tool:gen:preview</span><span class="ops" style="left:1890px"><span class="bx bp"><i style="left:4.3px;top:4.6px"><svg width="9" height="9" viewBox="0 0 9 9" style="display:inline-block;vertical-align:middle;"><path d="M6 1.2H0.7v7.1h7.1V5" fill="none" stroke="#fff" stroke-width="1.1"/><path d="M3.2 6.1l0.4-1.8L7.7 0.2l1.3 1.3L5 5.7z" fill="#fff"/></svg></i><span class="z">编辑</span></span><span class="bx bi"><i style="left:5px;top:4.8px"><svg width="8" height="8" viewBox="0 0 8 8" style="display:inline-block;vertical-align:middle;"><path d="M3 0h2v3h3v2H5v3H3V5H0V3h3z" fill="#fff"/></svg></i><span class="z">新增</span></span><span class="bx bd"><i style="left:3.8px;top:4.4px"><svg width="6" height="9" viewBox="0 0 6 9" style="display:inline-block;vertical-align:middle;"><path d="M1.8 2V1.2a0.8 0.8 0 0 1 0.8-0.8h0.8a0.8 0.8 0 0 1 0.8 0.8V2" fill="none" stroke="#fff" stroke-width="0.9"/><rect x="0" y="2" width="6" height="1" fill="#fff"/><path d="M0.9 3v5.1a0.5 0.5 0 0 0 0.5 0.5h3.2a0.5 0.5 0 0 0 0.5-0.5V3" fill="none" stroke="#fff" stroke-width="1"/><path d="M2.4 4v3.6M3.6 4v3.6" stroke="#fff" stroke-width="0.7"/></svg></i><span class="z">删除</span></span></span></div>
<div class="row" style="top:1147.70px;"><span class="radio"></span><span class="cell" style="left:76.2px"><span class="z">生成代码</span></span><span class="cell" style="left:499px">5</span><span class="cell" style="left:731px">#</span><span class="lblwrap" style="left:1079px"><span class="lbl lw"><span class="z">按钮</span></span></span><span class="cell" style="left:1311px">-</span><span class="cell" style="left:1542px">tool:gen:code</span><span class="ops" style="left:1890px"><span class="bx bp"><i style="left:4.3px;top:4.6px"><svg width="9" height="9" viewBox="0 0 9 9" style="display:inline-block;vertical-align:middle;"><path d="M6 1.2H0.7v7.1h7.1V5" fill="none" stroke="#fff" stroke-width="1.1"/><path d="M3.2 6.1l0.4-1.8L7.7 0.2l1.3 1.3L5 5.7z" fill="#fff"/></svg></i><span class="z">编辑</span></span><span class="bx bi"><i style="left:5px;top:4.8px"><svg width="8" height="8" viewBox="0 0 8 8" style="display:inline-block;vertical-align:middle;"><path d="M3 0h2v3h3v2H5v3H3V5H0V3h3z" fill="#fff"/></svg></i><span class="z">新增</span></span><span class="bx bd"><i style="left:3.8px;top:4.4px"><svg width="6" height="9" viewBox="0 0 6 9" style="display:inline-block;vertical-align:middle;"><path d="M1.8 2V1.2a0.8 0.8 0 0 1 0.8-0.8h0.8a0.8 0.8 0 0 1 0.8 0.8V2" fill="none" stroke="#fff" stroke-width="0.9"/><rect x="0" y="2" width="6" height="1" fill="#fff"/><path d="M0.9 3v5.1a0.5 0.5 0 0 0 0.5 0.5h3.2a0.5 0.5 0 0 0 0.5-0.5V3" fill="none" stroke="#fff" stroke-width="1"/><path d="M2.4 4v3.6M3.6 4v3.6" stroke="#fff" stroke-width="0.7"/></svg></i><span class="z">删除</span></span></span></div>
<div class="row" style="top:1179.90px;"><span class="radio"></span><span class="ico" style="left:61.9px;top:11.00px"><svg width="10" height="9" viewBox="0 0 10 9" style="display:inline-block;vertical-align:middle;"><path d="M2.7 1.8L0.5 4.3l2.2 2.5M5.2 1.8L3 4.3l2.2 2.5M7.3 1.8l2.2 2.5-2.2 2.5" fill="none" stroke="#606264" stroke-width="0.95"/></svg></span><span class="cell" style="left:75.7px"><span class="z">系统接口</span></span><span class="cell" style="left:499px">3</span><span class="cell" style="left:731px">/tool/swagger</span><span class="lblwrap" style="left:1079px"><span class="lbl ls"><span class="z">菜单</span></span></span><span class="lblwrap" style="left:1310px"><span class="badge"><span class="z">显示</span></span></span><span class="cell" style="left:1542px">tool:swagger:view</span><span class="ops" style="left:1890px"><span class="bx bp"><i style="left:4.3px;top:4.6px"><svg width="9" height="9" viewBox="0 0 9 9" style="display:inline-block;vertical-align:middle;"><path d="M6 1.2H0.7v7.1h7.1V5" fill="none" stroke="#fff" stroke-width="1.1"/><path d="M3.2 6.1l0.4-1.8L7.7 0.2l1.3 1.3L5 5.7z" fill="#fff"/></svg></i><span class="z">编辑</span></span><span class="bx bi"><i style="left:5px;top:4.8px"><svg width="8" height="8" viewBox="0 0 8 8" style="display:inline-block;vertical-align:middle;"><path d="M3 0h2v3h3v2H5v3H3V5H0V3h3z" fill="#fff"/></svg></i><span class="z">新增</span></span><span class="bx bd"><i style="left:3.8px;top:4.4px"><svg width="6" height="9" viewBox="0 0 6 9" style="display:inline-block;vertical-align:middle;"><path d="M1.8 2V1.2a0.8 0.8 0 0 1 0.8-0.8h0.8a0.8 0.8 0 0 1 0.8 0.8V2" fill="none" stroke="#fff" stroke-width="0.9"/><rect x="0" y="2" width="6" height="1" fill="#fff"/><path d="M0.9 3v5.1a0.5 0.5 0 0 0 0.5 0.5h3.2a0.5 0.5 0 0 0 0.5-0.5V3" fill="none" stroke="#fff" stroke-width="1"/><path d="M2.4 4v3.6M3.6 4v3.6" stroke="#fff" stroke-width="0.7"/></svg></i><span class="z">删除</span></span></span></div>
<div class="row" style="top:1212.10px;"><span class="radio"></span><span class="ico" style="left:48.3px;top:11.25px"><svg width="8.5" height="8.5" viewBox="0 0 8.5 8.5" style="display:inline-block;vertical-align:middle;"><path d="M8.5 0L0 3.9l3.9 0.6 0.6 4z" fill="#606264"/></svg></span><span class="cell" style="left:58.9px"><span class="z">若依官网</span></span><span class="cell" style="left:499px">4</span><span class="cell" style="left:731px">http://ruoyi.vip</span><span class="lblwrap" style="left:1079px"><span class="lbl ls"><span class="z">菜单</span></span></span><span class="lblwrap" style="left:1310px"><span class="badge"><span class="z">显示</span></span></span><span class="cell" style="left:1542px">-</span><span class="ops" style="left:1890px"><span class="bx bp"><i style="left:4.3px;top:4.6px"><svg width="9" height="9" viewBox="0 0 9 9" style="display:inline-block;vertical-align:middle;"><path d="M6 1.2H0.7v7.1h7.1V5" fill="none" stroke="#fff" stroke-width="1.1"/><path d="M3.2 6.1l0.4-1.8L7.7 0.2l1.3 1.3L5 5.7z" fill="#fff"/></svg></i><span class="z">编辑</span></span><span class="bx bi"><i style="left:5px;top:4.8px"><svg width="8" height="8" viewBox="0 0 8 8" style="display:inline-block;vertical-align:middle;"><path d="M3 0h2v3h3v2H5v3H3V5H0V3h3z" fill="#fff"/></svg></i><span class="z">新增</span></span><span class="bx bd"><i style="left:3.8px;top:4.4px"><svg width="6" height="9" viewBox="0 0 6 9" style="display:inline-block;vertical-align:middle;"><path d="M1.8 2V1.2a0.8 0.8 0 0 1 0.8-0.8h0.8a0.8 0.8 0 0 1 0.8 0.8V2" fill="none" stroke="#fff" stroke-width="0.9"/><rect x="0" y="2" width="6" height="1" fill="#fff"/><path d="M0.9 3v5.1a0.5 0.5 0 0 0 0.5 0.5h3.2a0.5 0.5 0 0 0 0.5-0.5V3" fill="none" stroke="#fff" stroke-width="1"/><path d="M2.4 4v3.6M3.6 4v3.6" stroke="#fff" stroke-width="0.7"/></svg></i><span class="z">删除</span></span></span></div>
<div class="abs" style="left:160px;top:1272px;width:2400px;height:29px;background:#fff;border-top:1px solid #e7eaec;border-bottom:1px solid #e7eaec"></div>
<span class="abs" style="left:2432px;top:1280px;line-height:16px;font-size:10.4px;color:#676a6c">© 2022 RuoYi Copyright</span>
<div class="abs" style="left:2553.2px;top:74px;width:5.6px;height:1196px;border-radius:3px;background:#c1c1c1"></div>
</body></html>
